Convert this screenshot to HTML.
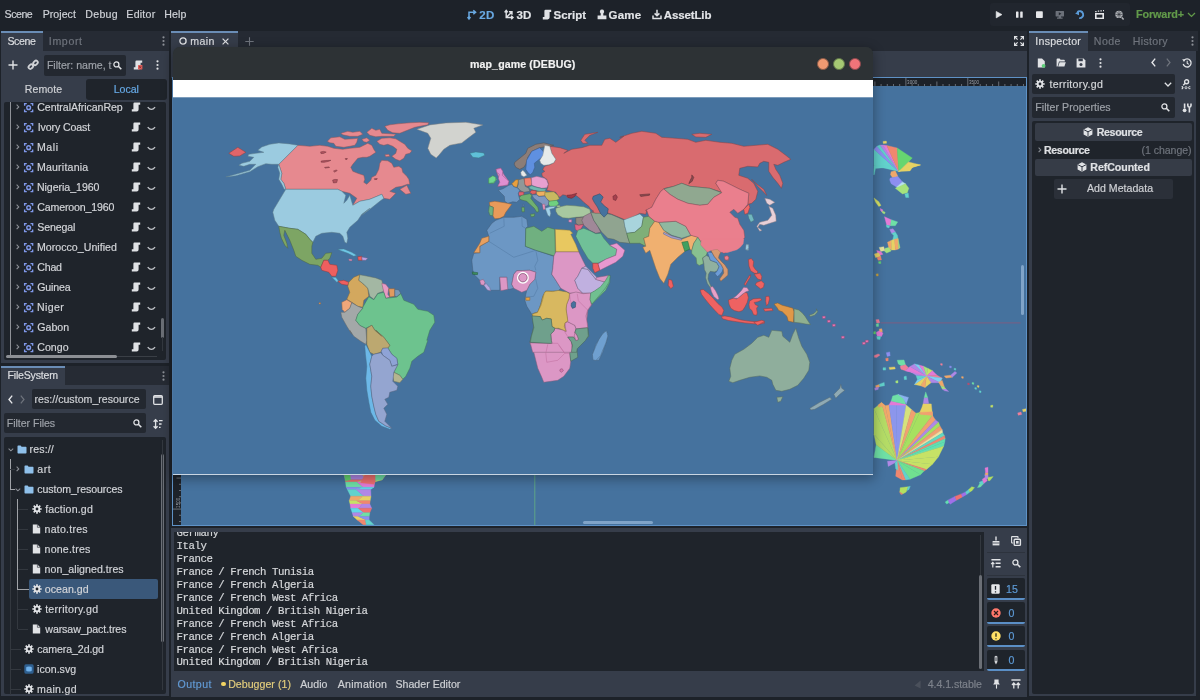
<!DOCTYPE html>
<html lang="en">
<head>
<meta charset="utf-8">
<title>map_game - Godot Engine</title>
<style>
*{box-sizing:border-box;margin:0;padding:0}
html,body{width:1200px;height:700px;overflow:hidden;background:#1d2229}
body{position:relative;font-family:"Liberation Sans",sans-serif;font-size:10.5px;color:#d3d5d9;line-height:1}
.a{position:absolute}
.t{position:absolute;white-space:pre;line-height:14px;height:14px;-webkit-text-stroke:.18px}
.b{font-weight:700}
.dim{color:#7d828b}
.acc{color:#70bafa}
.panel{position:absolute;background:#363d4a}
.dark{position:absolute;background:#1f242b}
.tabbar{position:absolute;background:#262b34}
.tab{position:absolute;background:#363d4a;border-top:2px solid #6a8db6}
.field{position:absolute;background:#232830;border-radius:2px}
svg{position:absolute;overflow:visible}
.mono{font-family:"Liberation Mono",monospace;font-size:10px;color:#d6d8db}
</style>
</head>
<body>
<div id="root" style="position:absolute;left:0;top:0;width:1200px;height:700px;will-change:transform;overflow:hidden">
<!-- ===== top menu bar ===== -->
<div class="a" style="left:0;top:0;width:1200px;height:30px;background:#1d2229"></div>
<div class="t" style="left:4.62px;top:7.23px;font-size:10.6px;letter-spacing:-0.476px;color:#d0d3d8">Scene</div>
<div class="t" style="left:42.63px;top:7.23px;font-size:10.6px;letter-spacing:0.043px;color:#d0d3d8">Project</div>
<div class="t" style="left:85.33px;top:7.23px;font-size:10.6px;letter-spacing:0.279px;color:#d0d3d8">Debug</div>
<div class="t" style="left:126.33px;top:7.23px;font-size:10.6px;letter-spacing:0.231px;color:#d0d3d8">Editor</div>
<div class="t" style="left:164.33px;top:7.23px;font-size:10.6px;letter-spacing:0.105px;color:#d0d3d8">Help</div>

<!-- workspace switcher -->
<svg style="left:467px;top:9px" width="10" height="11" viewBox="0 0 10 11"><path d="M2 10V3.2H8M6.3 1.2 8.6 3.2 6.3 5.2M.6 8 2 10 3.4 8" fill="none" stroke="#69a9e2" stroke-width="1.5"/></svg>
<div class="t b" style="left:479.20px;top:7.95px;font-size:11.5px;letter-spacing:0.381px;color:#69a9e2">2D</div>
<svg style="left:504px;top:9px" width="10" height="11" viewBox="0 0 10 11"><path d="M2.2 1.5V8.5H9M.6 3.4 2.2 1.4 3.8 3.4M7.2 6.8 9 8.5 7.2 10.2M2.4 8.3 7.6 3.2M5 2.8H8V5.8" fill="none" stroke="#e0e2e5" stroke-width="1.4"/></svg>
<div class="t b" style="left:516.54px;top:7.95px;font-size:11.5px;letter-spacing:0.046px;color:#e3e5e8">3D</div>
<svg style="left:541.5px;top:9px" width="10" height="11" viewBox="0 0 10 11"><path d="M3 .8H9.2V3H7.6V8.6Q7.6 10.4 5.6 10.4H.8V8H2.4V2Q2.4 .8 3.6 .8Z" fill="#e0e2e5"/></svg>
<div class="t b" style="left:553.57px;top:7.95px;font-size:11.5px;letter-spacing:-0.004px;color:#e3e5e8">Script</div>
<svg style="left:596.5px;top:9px" width="10" height="11" viewBox="0 0 10 11"><path d="M5 .6A2.1 2.1 0 0 1 6.3 4.4V6.4H9.4V10.2H.6V6.4H3.7V4.4A2.1 2.1 0 0 1 5 .6Z" fill="#e0e2e5"/></svg>
<div class="t b" style="left:608.53px;top:7.95px;font-size:11.5px;letter-spacing:0.201px;color:#e3e5e8">Game</div>
<svg style="left:651.5px;top:9px" width="10" height="11" viewBox="0 0 10 11"><path d="M5 .8V6.6M2.6 4.4 5 6.8 7.4 4.4M1 6.6V9.6H9V6.6" fill="none" stroke="#e0e2e5" stroke-width="1.5"/></svg>
<div class="t b" style="left:663.71px;top:7.95px;font-size:11.5px;letter-spacing:-0.115px;color:#e3e5e8">AssetLib</div>

<!-- run bar -->
<div class="a" style="left:990px;top:3.2px;width:140px;height:22.4px;background:#21262e;border-radius:3px"></div>
<svg style="left:994px;top:9px" width="10" height="11" viewBox="0 0 10 11"><path d="M2.2 2.4 8 5.6 2.2 8.9Z" fill="#e6e7ea" stroke="#e6e7ea" stroke-width=".6" stroke-linejoin="round"/></svg>
<svg style="left:1014px;top:9px" width="10" height="11" viewBox="0 0 10 11"><rect x="2" y="2.5" width="2.5" height="6.3" rx=".6" fill="#e6e7ea"/><rect x="6.2" y="2.5" width="2.5" height="6.3" rx=".6" fill="#e6e7ea"/></svg>
<svg style="left:1034px;top:9px" width="10" height="11" viewBox="0 0 10 11"><rect x="2" y="2.3" width="6.8" height="6.8" rx=".8" fill="#e6e7ea"/></svg>
<svg style="left:1054px;top:9px" width="10" height="11" viewBox="0 0 10 11"><path d="M1.6 2.4Q1.6 2 2 2H9.6Q10 2 10 2.4V7Q10 7.4 9.6 7.4H7V8.6H8.6V9.8H3V8.6H4.6V7.4H2Q1.6 7.4 1.6 7Z" fill="#6c717a"/><path d="M4.8 3.2 7.4 4.7 4.8 6.2Z" fill="#21262e"/></svg>
<svg style="left:1074px;top:9px" width="11" height="11" viewBox="0 0 11 11"><path d="M3.4 3A3.5 3.5 0 1 1 5.2 9.1" fill="none" stroke="#5b9bd8" stroke-width="1.9"/><path d="M1.2 4.6 5 1.6 5 6.2Z" fill="#5b9bd8"/></svg>
<svg style="left:1094px;top:9px" width="11" height="11" viewBox="0 0 11 11"><path d="M1 4H10V10H1Z" fill="#e6e7ea"/><path d="M1.2 2.6H2.6M3.8 2.2H5.2M6.4 1.8H7.8M9 1.6H10" stroke="#e6e7ea" stroke-width="1.3"/><rect x="2.6" y="5.6" width="5.8" height="3" fill="#21262e"/></svg>
<svg style="left:1114px;top:9px" width="11" height="11" viewBox="0 0 11 11"><circle cx="5" cy="5.4" r="3.7" fill="#b4b7bc"/><path d="M7.8 8.4 9.6 10.4" stroke="#b4b7bc" stroke-width="1.5"/><path d="M5 1.8V9M1.4 5.4H8.6M2.6 3 7.4 7.8M7.4 3 2.6 7.8" stroke="#21262e" stroke-width=".6"/></svg>
<div class="t b" style="left:1135.98px;top:7.31px;font-size:10.8px;letter-spacing:-0.122px;color:#629a4a">Forward+</div>
<svg style="left:1187px;top:12px" width="9" height="6" viewBox="0 0 9 6"><path d="M1 1 4.5 4.4 8 1" fill="none" stroke="#629a4a" stroke-width="1.3"/></svg>
<!-- ===== scene dock ===== -->
<div class="panel" style="left:1.2px;top:31px;width:167.8px;height:332px"></div>
<div class="tabbar" style="left:43px;top:31px;width:126px;height:19.8px"></div>
<div class="tab" style="left:1.2px;top:31px;width:41.8px;height:19.8px"></div>
<div class="t" style="left:7.42px;top:34.43px;font-size:10.6px;letter-spacing:-0.401px;color:#dcdee1">Scene</div>
<div class="t" style="left:48.82px;top:34.43px;font-size:10.6px;letter-spacing:0.643px;color:#6f747d">Import</div>
<svg style="left:162.2px;top:36px" width="3" height="10" viewBox="0 0 3 10"><circle cx="1.5" cy="1.3" r="1.1" fill="#8b8f96"/><circle cx="1.5" cy="5" r="1.1" fill="#8b8f96"/><circle cx="1.5" cy="8.7" r="1.1" fill="#8b8f96"/></svg>
<svg style="left:8px;top:60px" width="10" height="10" viewBox="0 0 10 10"><path d="M5 .5V9.5M.5 5H9.5" stroke="#e0e2e5" stroke-width="1.4"/></svg>
<svg style="left:27.5px;top:60px" width="10" height="10" viewBox="0 0 10 10"><g fill="none" stroke="#d0d2d6" stroke-width="1.8"><rect x="4.3" y=".4" width="5" height="3.6" rx="1.8" transform="rotate(-45 6.8 2.2) translate(0 1)"/><rect x=".6" y="5.2" width="5" height="3.6" rx="1.8" transform="rotate(-45 3.1 7) translate(0 -.4)"/></g></svg>
<div class="field" style="left:44px;top:55px;width:82px;height:20.5px"></div>
<div class="t" style="left:46.93px;top:58.03px;font-size:10.6px;letter-spacing:-0.018px;color:#9da1a8">Filter: name, t</div>
<svg style="left:113px;top:60.5px" width="9" height="9" viewBox="0 0 9 9"><circle cx="3.4" cy="3.4" r="2.5" fill="none" stroke="#e0e2e5" stroke-width="1.3"/><path d="M5.3 5.3 8.3 8.3" stroke="#e0e2e5" stroke-width="1.6"/></svg>
<svg style="left:133px;top:60px" width="10" height="10" viewBox="0 0 10 10"><path d="M3 .5H9.2V2.8H7.6V7.6Q7.6 9.5 5.6 9.5H.8V7.2H2.4V1.8Q2.4 .5 3.6 .5Z" fill="#e0e2e5"/></svg>
<svg style="left:138.3px;top:65.2px" width="4.4" height="4.4" viewBox="0 0 4.4 4.4"><rect width="4.4" height="4.4" rx=".6" fill="#e0605c"/><path d="M1.1 1.1 3.3 3.3M3.3 1.1 1.1 3.3" stroke="#7a2a2a" stroke-width=".7"/></svg>
<svg style="left:156px;top:60px" width="3" height="10" viewBox="0 0 3 10"><circle cx="1.5" cy="1.3" r="1.1" fill="#e0e2e5"/><circle cx="1.5" cy="5" r="1.1" fill="#e0e2e5"/><circle cx="1.5" cy="8.7" r="1.1" fill="#e0e2e5"/></svg>
<div class="t" style="left:24.83px;top:81.93px;font-size:10.6px;letter-spacing:0.045px;color:#cfd1d5">Remote</div>
<div class="a" style="left:86px;top:79px;width:80.5px;height:20.5px;background:#1f242b;border-radius:3px"></div>
<div class="t" style="left:113.73px;top:81.93px;font-size:10.6px;letter-spacing:-0.041px;color:#66a9e6">Local</div>
<div class="dark" style="left:3.7px;top:101.5px;width:162.8px;height:258px;border-radius:2px"></div>
<div class="a" style="left:9.6px;top:101.5px;width:1.5px;height:253px;background:#8f9298"></div>
<svg style="left:16.1px;top:104.3px" width="3.4" height="5.8" viewBox="0 0 4 7"><path d="M.7 .7 3.3 3.5 .7 6.3" fill="none" stroke="#8b8f96" stroke-width="1.3"/></svg>
<svg style="left:23.900000000000002px;top:102.60000000000001px" width="9.3" height="9.3" viewBox="0 0 10 10"><path d="M.7 3V.7H3M7 .7H9.3V3M9.3 7V9.3H7M3 9.3H.7V7" fill="none" stroke="#8099ea" stroke-width="1.5"/><circle cx="5" cy="5" r="2" fill="none" stroke="#8099ea" stroke-width="1.5"/></svg>
<div class="t" style="left:37.26px;top:99.53px;font-size:10.6px;letter-spacing:-0.070px;color:#d3d5d9">CentralAfricanRep</div>
<svg style="left:131.3px;top:102.2px" width="10" height="10" viewBox="0 0 10 10"><path d="M3 .5H9.2V2.8H7.6V7.6Q7.6 9.5 5.6 9.5H.8V7.2H2.4V1.8Q2.4 .5 3.6 .5Z" fill="#e0e2e5"/></svg>
<svg style="left:146.9px;top:105.9px" width="8.8" height="5.3" viewBox="0 0 10 6"><path d="M.8 1.2Q5 6.4 9.2 1.2" fill="none" stroke="#c4c7cc" stroke-width="1.4"/></svg>
<svg style="left:16.1px;top:124.3px" width="3.4" height="5.8" viewBox="0 0 4 7"><path d="M.7 .7 3.3 3.5 .7 6.3" fill="none" stroke="#8b8f96" stroke-width="1.3"/></svg>
<svg style="left:23.900000000000002px;top:122.60000000000001px" width="9.3" height="9.3" viewBox="0 0 10 10"><path d="M.7 3V.7H3M7 .7H9.3V3M9.3 7V9.3H7M3 9.3H.7V7" fill="none" stroke="#8099ea" stroke-width="1.5"/><circle cx="5" cy="5" r="2" fill="none" stroke="#8099ea" stroke-width="1.5"/></svg>
<div class="t" style="left:37.72px;top:119.53px;font-size:10.6px;letter-spacing:-0.105px;color:#d3d5d9">Ivory Coast</div>
<svg style="left:131.3px;top:122.2px" width="10" height="10" viewBox="0 0 10 10"><path d="M3 .5H9.2V2.8H7.6V7.6Q7.6 9.5 5.6 9.5H.8V7.2H2.4V1.8Q2.4 .5 3.6 .5Z" fill="#e0e2e5"/></svg>
<svg style="left:146.9px;top:125.9px" width="8.8" height="5.3" viewBox="0 0 10 6"><path d="M.8 1.2Q5 6.4 9.2 1.2" fill="none" stroke="#c4c7cc" stroke-width="1.4"/></svg>
<svg style="left:16.1px;top:144.29999999999998px" width="3.4" height="5.8" viewBox="0 0 4 7"><path d="M.7 .7 3.3 3.5 .7 6.3" fill="none" stroke="#8b8f96" stroke-width="1.3"/></svg>
<svg style="left:23.900000000000002px;top:142.6px" width="9.3" height="9.3" viewBox="0 0 10 10"><path d="M.7 3V.7H3M7 .7H9.3V3M9.3 7V9.3H7M3 9.3H.7V7" fill="none" stroke="#8099ea" stroke-width="1.5"/><circle cx="5" cy="5" r="2" fill="none" stroke="#8099ea" stroke-width="1.5"/></svg>
<div class="t" style="left:36.93px;top:139.53px;font-size:10.6px;letter-spacing:0.550px;color:#d3d5d9">Mali</div>
<svg style="left:131.3px;top:142.2px" width="10" height="10" viewBox="0 0 10 10"><path d="M3 .5H9.2V2.8H7.6V7.6Q7.6 9.5 5.6 9.5H.8V7.2H2.4V1.8Q2.4 .5 3.6 .5Z" fill="#e0e2e5"/></svg>
<svg style="left:146.9px;top:145.89999999999998px" width="8.8" height="5.3" viewBox="0 0 10 6"><path d="M.8 1.2Q5 6.4 9.2 1.2" fill="none" stroke="#c4c7cc" stroke-width="1.4"/></svg>
<svg style="left:16.1px;top:164.29999999999998px" width="3.4" height="5.8" viewBox="0 0 4 7"><path d="M.7 .7 3.3 3.5 .7 6.3" fill="none" stroke="#8b8f96" stroke-width="1.3"/></svg>
<svg style="left:23.900000000000002px;top:162.6px" width="9.3" height="9.3" viewBox="0 0 10 10"><path d="M.7 3V.7H3M7 .7H9.3V3M9.3 7V9.3H7M3 9.3H.7V7" fill="none" stroke="#8099ea" stroke-width="1.5"/><circle cx="5" cy="5" r="2" fill="none" stroke="#8099ea" stroke-width="1.5"/></svg>
<div class="t" style="left:36.93px;top:159.53px;font-size:10.6px;letter-spacing:0.198px;color:#d3d5d9">Mauritania</div>
<svg style="left:131.3px;top:162.2px" width="10" height="10" viewBox="0 0 10 10"><path d="M3 .5H9.2V2.8H7.6V7.6Q7.6 9.5 5.6 9.5H.8V7.2H2.4V1.8Q2.4 .5 3.6 .5Z" fill="#e0e2e5"/></svg>
<svg style="left:146.9px;top:165.89999999999998px" width="8.8" height="5.3" viewBox="0 0 10 6"><path d="M.8 1.2Q5 6.4 9.2 1.2" fill="none" stroke="#c4c7cc" stroke-width="1.4"/></svg>
<svg style="left:16.1px;top:184.29999999999998px" width="3.4" height="5.8" viewBox="0 0 4 7"><path d="M.7 .7 3.3 3.5 .7 6.3" fill="none" stroke="#8b8f96" stroke-width="1.3"/></svg>
<svg style="left:23.900000000000002px;top:182.6px" width="9.3" height="9.3" viewBox="0 0 10 10"><path d="M.7 3V.7H3M7 .7H9.3V3M9.3 7V9.3H7M3 9.3H.7V7" fill="none" stroke="#8099ea" stroke-width="1.5"/><circle cx="5" cy="5" r="2" fill="none" stroke="#8099ea" stroke-width="1.5"/></svg>
<div class="t" style="left:36.93px;top:179.53px;font-size:10.6px;letter-spacing:-0.043px;color:#d3d5d9">Nigeria_1960</div>
<svg style="left:131.3px;top:182.2px" width="10" height="10" viewBox="0 0 10 10"><path d="M3 .5H9.2V2.8H7.6V7.6Q7.6 9.5 5.6 9.5H.8V7.2H2.4V1.8Q2.4 .5 3.6 .5Z" fill="#e0e2e5"/></svg>
<svg style="left:146.9px;top:185.89999999999998px" width="8.8" height="5.3" viewBox="0 0 10 6"><path d="M.8 1.2Q5 6.4 9.2 1.2" fill="none" stroke="#c4c7cc" stroke-width="1.4"/></svg>
<svg style="left:16.1px;top:204.29999999999998px" width="3.4" height="5.8" viewBox="0 0 4 7"><path d="M.7 .7 3.3 3.5 .7 6.3" fill="none" stroke="#8b8f96" stroke-width="1.3"/></svg>
<svg style="left:23.900000000000002px;top:202.6px" width="9.3" height="9.3" viewBox="0 0 10 10"><path d="M.7 3V.7H3M7 .7H9.3V3M9.3 7V9.3H7M3 9.3H.7V7" fill="none" stroke="#8099ea" stroke-width="1.5"/><circle cx="5" cy="5" r="2" fill="none" stroke="#8099ea" stroke-width="1.5"/></svg>
<div class="t" style="left:37.26px;top:199.53px;font-size:10.6px;letter-spacing:-0.151px;color:#d3d5d9">Cameroon_1960</div>
<svg style="left:131.3px;top:202.2px" width="10" height="10" viewBox="0 0 10 10"><path d="M3 .5H9.2V2.8H7.6V7.6Q7.6 9.5 5.6 9.5H.8V7.2H2.4V1.8Q2.4 .5 3.6 .5Z" fill="#e0e2e5"/></svg>
<svg style="left:146.9px;top:205.89999999999998px" width="8.8" height="5.3" viewBox="0 0 10 6"><path d="M.8 1.2Q5 6.4 9.2 1.2" fill="none" stroke="#c4c7cc" stroke-width="1.4"/></svg>
<svg style="left:16.1px;top:224.29999999999998px" width="3.4" height="5.8" viewBox="0 0 4 7"><path d="M.7 .7 3.3 3.5 .7 6.3" fill="none" stroke="#8b8f96" stroke-width="1.3"/></svg>
<svg style="left:23.900000000000002px;top:222.6px" width="9.3" height="9.3" viewBox="0 0 10 10"><path d="M.7 3V.7H3M7 .7H9.3V3M9.3 7V9.3H7M3 9.3H.7V7" fill="none" stroke="#8099ea" stroke-width="1.5"/><circle cx="5" cy="5" r="2" fill="none" stroke="#8099ea" stroke-width="1.5"/></svg>
<div class="t" style="left:37.32px;top:219.53px;font-size:10.6px;letter-spacing:-0.135px;color:#d3d5d9">Senegal</div>
<svg style="left:131.3px;top:222.2px" width="10" height="10" viewBox="0 0 10 10"><path d="M3 .5H9.2V2.8H7.6V7.6Q7.6 9.5 5.6 9.5H.8V7.2H2.4V1.8Q2.4 .5 3.6 .5Z" fill="#e0e2e5"/></svg>
<svg style="left:146.9px;top:225.89999999999998px" width="8.8" height="5.3" viewBox="0 0 10 6"><path d="M.8 1.2Q5 6.4 9.2 1.2" fill="none" stroke="#c4c7cc" stroke-width="1.4"/></svg>
<svg style="left:16.1px;top:244.29999999999998px" width="3.4" height="5.8" viewBox="0 0 4 7"><path d="M.7 .7 3.3 3.5 .7 6.3" fill="none" stroke="#8b8f96" stroke-width="1.3"/></svg>
<svg style="left:23.900000000000002px;top:242.6px" width="9.3" height="9.3" viewBox="0 0 10 10"><path d="M.7 3V.7H3M7 .7H9.3V3M9.3 7V9.3H7M3 9.3H.7V7" fill="none" stroke="#8099ea" stroke-width="1.5"/><circle cx="5" cy="5" r="2" fill="none" stroke="#8099ea" stroke-width="1.5"/></svg>
<div class="t" style="left:36.93px;top:239.53px;font-size:10.6px;letter-spacing:0.037px;color:#d3d5d9">Morocco_Unified</div>
<svg style="left:131.3px;top:242.2px" width="10" height="10" viewBox="0 0 10 10"><path d="M3 .5H9.2V2.8H7.6V7.6Q7.6 9.5 5.6 9.5H.8V7.2H2.4V1.8Q2.4 .5 3.6 .5Z" fill="#e0e2e5"/></svg>
<svg style="left:146.9px;top:245.89999999999998px" width="8.8" height="5.3" viewBox="0 0 10 6"><path d="M.8 1.2Q5 6.4 9.2 1.2" fill="none" stroke="#c4c7cc" stroke-width="1.4"/></svg>
<svg style="left:16.1px;top:264.3px" width="3.4" height="5.8" viewBox="0 0 4 7"><path d="M.7 .7 3.3 3.5 .7 6.3" fill="none" stroke="#8b8f96" stroke-width="1.3"/></svg>
<svg style="left:23.900000000000002px;top:262.59999999999997px" width="9.3" height="9.3" viewBox="0 0 10 10"><path d="M.7 3V.7H3M7 .7H9.3V3M9.3 7V9.3H7M3 9.3H.7V7" fill="none" stroke="#8099ea" stroke-width="1.5"/><circle cx="5" cy="5" r="2" fill="none" stroke="#8099ea" stroke-width="1.5"/></svg>
<div class="t" style="left:37.26px;top:259.53px;font-size:10.6px;letter-spacing:-0.206px;color:#d3d5d9">Chad</div>
<svg style="left:131.3px;top:262.2px" width="10" height="10" viewBox="0 0 10 10"><path d="M3 .5H9.2V2.8H7.6V7.6Q7.6 9.5 5.6 9.5H.8V7.2H2.4V1.8Q2.4 .5 3.6 .5Z" fill="#e0e2e5"/></svg>
<svg style="left:146.9px;top:265.9px" width="8.8" height="5.3" viewBox="0 0 10 6"><path d="M.8 1.2Q5 6.4 9.2 1.2" fill="none" stroke="#c4c7cc" stroke-width="1.4"/></svg>
<svg style="left:16.1px;top:284.3px" width="3.4" height="5.8" viewBox="0 0 4 7"><path d="M.7 .7 3.3 3.5 .7 6.3" fill="none" stroke="#8b8f96" stroke-width="1.3"/></svg>
<svg style="left:23.900000000000002px;top:282.59999999999997px" width="9.3" height="9.3" viewBox="0 0 10 10"><path d="M.7 3V.7H3M7 .7H9.3V3M9.3 7V9.3H7M3 9.3H.7V7" fill="none" stroke="#8099ea" stroke-width="1.5"/><circle cx="5" cy="5" r="2" fill="none" stroke="#8099ea" stroke-width="1.5"/></svg>
<div class="t" style="left:37.27px;top:279.53px;font-size:10.6px;letter-spacing:-0.150px;color:#d3d5d9">Guinea</div>
<svg style="left:131.3px;top:282.2px" width="10" height="10" viewBox="0 0 10 10"><path d="M3 .5H9.2V2.8H7.6V7.6Q7.6 9.5 5.6 9.5H.8V7.2H2.4V1.8Q2.4 .5 3.6 .5Z" fill="#e0e2e5"/></svg>
<svg style="left:146.9px;top:285.9px" width="8.8" height="5.3" viewBox="0 0 10 6"><path d="M.8 1.2Q5 6.4 9.2 1.2" fill="none" stroke="#c4c7cc" stroke-width="1.4"/></svg>
<svg style="left:16.1px;top:304.3px" width="3.4" height="5.8" viewBox="0 0 4 7"><path d="M.7 .7 3.3 3.5 .7 6.3" fill="none" stroke="#8b8f96" stroke-width="1.3"/></svg>
<svg style="left:23.900000000000002px;top:302.59999999999997px" width="9.3" height="9.3" viewBox="0 0 10 10"><path d="M.7 3V.7H3M7 .7H9.3V3M9.3 7V9.3H7M3 9.3H.7V7" fill="none" stroke="#8099ea" stroke-width="1.5"/><circle cx="5" cy="5" r="2" fill="none" stroke="#8099ea" stroke-width="1.5"/></svg>
<div class="t" style="left:36.93px;top:299.53px;font-size:10.6px;letter-spacing:0.354px;color:#d3d5d9">Niger</div>
<svg style="left:131.3px;top:302.2px" width="10" height="10" viewBox="0 0 10 10"><path d="M3 .5H9.2V2.8H7.6V7.6Q7.6 9.5 5.6 9.5H.8V7.2H2.4V1.8Q2.4 .5 3.6 .5Z" fill="#e0e2e5"/></svg>
<svg style="left:146.9px;top:305.9px" width="8.8" height="5.3" viewBox="0 0 10 6"><path d="M.8 1.2Q5 6.4 9.2 1.2" fill="none" stroke="#c4c7cc" stroke-width="1.4"/></svg>
<svg style="left:16.1px;top:324.3px" width="3.4" height="5.8" viewBox="0 0 4 7"><path d="M.7 .7 3.3 3.5 .7 6.3" fill="none" stroke="#8b8f96" stroke-width="1.3"/></svg>
<svg style="left:23.900000000000002px;top:322.59999999999997px" width="9.3" height="9.3" viewBox="0 0 10 10"><path d="M.7 3V.7H3M7 .7H9.3V3M9.3 7V9.3H7M3 9.3H.7V7" fill="none" stroke="#8099ea" stroke-width="1.5"/><circle cx="5" cy="5" r="2" fill="none" stroke="#8099ea" stroke-width="1.5"/></svg>
<div class="t" style="left:37.27px;top:319.53px;font-size:10.6px;letter-spacing:0.024px;color:#d3d5d9">Gabon</div>
<svg style="left:131.3px;top:322.2px" width="10" height="10" viewBox="0 0 10 10"><path d="M3 .5H9.2V2.8H7.6V7.6Q7.6 9.5 5.6 9.5H.8V7.2H2.4V1.8Q2.4 .5 3.6 .5Z" fill="#e0e2e5"/></svg>
<svg style="left:146.9px;top:325.9px" width="8.8" height="5.3" viewBox="0 0 10 6"><path d="M.8 1.2Q5 6.4 9.2 1.2" fill="none" stroke="#c4c7cc" stroke-width="1.4"/></svg>
<svg style="left:16.1px;top:344.3px" width="3.4" height="5.8" viewBox="0 0 4 7"><path d="M.7 .7 3.3 3.5 .7 6.3" fill="none" stroke="#8b8f96" stroke-width="1.3"/></svg>
<svg style="left:23.900000000000002px;top:342.59999999999997px" width="9.3" height="9.3" viewBox="0 0 10 10"><path d="M.7 3V.7H3M7 .7H9.3V3M9.3 7V9.3H7M3 9.3H.7V7" fill="none" stroke="#8099ea" stroke-width="1.5"/><circle cx="5" cy="5" r="2" fill="none" stroke="#8099ea" stroke-width="1.5"/></svg>
<div class="t" style="left:37.26px;top:339.53px;font-size:10.6px;letter-spacing:0.037px;color:#d3d5d9">Congo</div>
<svg style="left:131.3px;top:342.2px" width="10" height="10" viewBox="0 0 10 10"><path d="M3 .5H9.2V2.8H7.6V7.6Q7.6 9.5 5.6 9.5H.8V7.2H2.4V1.8Q2.4 .5 3.6 .5Z" fill="#e0e2e5"/></svg>
<svg style="left:146.9px;top:345.9px" width="8.8" height="5.3" viewBox="0 0 10 6"><path d="M.8 1.2Q5 6.4 9.2 1.2" fill="none" stroke="#c4c7cc" stroke-width="1.4"/></svg>
<div class="a" style="left:161.2px;top:317.5px;width:3px;height:20px;background:#6b6f76;border-radius:1.5px"></div>
<div class="a" style="left:162.3px;top:337px;width:1px;height:13.5px;background:#33383f"></div>
<div class="a" style="left:6px;top:354.8px;width:111px;height:3px;background:#8c8f94;border-radius:1.5px"></div>
<div class="a" style="left:117px;top:355.8px;width:40px;height:1px;background:#3a3f46"></div>
<!-- ===== filesystem dock ===== -->
<div class="panel" style="left:1.2px;top:365.5px;width:167.8px;height:330.5px"></div>
<div class="tabbar" style="left:65px;top:365.5px;width:104px;height:19.8px"></div>
<div class="tab" style="left:1.2px;top:365.5px;width:63.8px;height:19.8px"></div>
<div class="t" style="left:7.53px;top:368.13px;font-size:10.6px;letter-spacing:-0.217px;color:#dcdee1">FileSystem</div>
<svg style="left:162.2px;top:370.5px" width="3" height="10" viewBox="0 0 3 10"><circle cx="1.5" cy="1.3" r="1.1" fill="#8b8f96"/><circle cx="1.5" cy="5" r="1.1" fill="#8b8f96"/><circle cx="1.5" cy="8.7" r="1.1" fill="#8b8f96"/></svg>
<svg style="left:8px;top:395px" width="5" height="9" viewBox="0 0 5 9"><path d="M4.2 .6 1 4.5 4.2 8.4" fill="none" stroke="#e6e7ea" stroke-width="1.4"/></svg>
<svg style="left:20px;top:395px" width="5" height="9" viewBox="0 0 5 9"><path d="M.8 .6 4 4.5 .8 8.4" fill="none" stroke="#6f747d" stroke-width="1.2"/></svg>
<div class="field" style="left:31.7px;top:389.3px;width:114.3px;height:20.2px"></div>
<div class="t" style="left:34.50px;top:392.13px;font-size:10.6px;letter-spacing:0.016px;color:#cfd1d5">res://custom_resource</div>
<svg style="left:152.5px;top:394.5px" width="10" height="10" viewBox="0 0 10 10"><rect x=".7" y=".7" width="8.6" height="8.6" rx="1" fill="none" stroke="#e0e2e5" stroke-width="1.3"/><path d="M.7 2H9.3" stroke="#e0e2e5" stroke-width="1.6"/></svg>
<div class="field" style="left:4.2px;top:413.3px;width:141.8px;height:20.2px"></div>
<div class="t" style="left:6.83px;top:416.13px;font-size:10.6px;letter-spacing:-0.048px;color:#9da1a8">Filter Files</div>
<svg style="left:133px;top:419px" width="9" height="9" viewBox="0 0 9 9"><circle cx="3.4" cy="3.4" r="2.5" fill="none" stroke="#e0e2e5" stroke-width="1.3"/><path d="M5.3 5.3 8.3 8.3" stroke="#e0e2e5" stroke-width="1.6"/></svg>
<svg style="left:152.5px;top:418.5px" width="10" height="10" viewBox="0 0 10 10"><path d="M2.6 .8V9.2M.6 2.8 2.6 .7 4.6 2.8M.6 7.2 2.6 9.3 4.6 7.2M6 1.6H9.6M6 5H8.6M6 8.4H7.6" fill="none" stroke="#e0e2e5" stroke-width="1.3"/></svg>
<div class="dark" style="left:4.2px;top:436.7px;width:162.3px;height:257px;border-radius:2px"></div>
<div class="a" style="left:10px;top:459px;width:1px;height:236px;background:#33383f"></div>
<div class="a" style="left:9.6px;top:459px;width:1.6px;height:30px;background:#a0a3a8"></div>
<div class="a" style="left:10px;top:488.5px;width:4.5px;height:1px;background:#a0a3a8"></div>
<div class="a" style="left:10px;top:469px;width:4.5px;height:1px;background:#33383f"></div>
<div class="a" style="left:17.2px;top:499px;width:1px;height:130px;background:#33383f"></div>
<div class="a" style="left:16.9px;top:499px;width:1.6px;height:90px;background:#a0a3a8"></div>
<div class="a" style="left:17.2px;top:588.5px;width:12px;height:1px;background:#a0a3a8"></div>
<div class="a" style="left:18px;top:509px;width:10px;height:1px;background:#33383f"></div>
<div class="a" style="left:18px;top:529px;width:10px;height:1px;background:#33383f"></div>
<div class="a" style="left:18px;top:549px;width:10px;height:1px;background:#33383f"></div>
<div class="a" style="left:18px;top:569px;width:10px;height:1px;background:#33383f"></div>
<div class="a" style="left:18px;top:609px;width:10px;height:1px;background:#33383f"></div>
<div class="a" style="left:18px;top:629px;width:10px;height:1px;background:#33383f"></div>
<div class="a" style="left:11px;top:649px;width:10px;height:1px;background:#33383f"></div>
<div class="a" style="left:11px;top:669px;width:10px;height:1px;background:#33383f"></div>
<div class="a" style="left:11px;top:689px;width:10px;height:1px;background:#33383f"></div>
<div class="a" style="left:28.7px;top:578.5px;width:129.8px;height:20px;background:#3a587a;border-radius:2px"></div>
<svg style="left:8.4px;top:448.0px" width="5.8" height="3.4" viewBox="0 0 7 4"><path d="M.7 .7 3.5 3.3 6.3 .7" fill="none" stroke="#8b8f96" stroke-width="1.3"/></svg>
<svg style="left:16.5px;top:444.5px" width="10" height="9" viewBox="0 0 10 9"><path d="M.5 1.2Q.5 .5 1.2 .5H3.6L4.6 1.8H8.8Q9.5 1.8 9.5 2.5V7.8Q9.5 8.5 8.8 8.5H1.2Q.5 8.5 .5 7.8Z" fill="#8fc0ea"/></svg>
<div class="t" style="left:29.50px;top:441.53px;font-size:10.6px;letter-spacing:0.149px;color:#d3d5d9">res://</div>
<svg style="left:16.3px;top:466.3px" width="3.4" height="5.8" viewBox="0 0 4 7"><path d="M.7 .7 3.3 3.5 .7 6.3" fill="none" stroke="#8b8f96" stroke-width="1.3"/></svg>
<svg style="left:23.8px;top:464.5px" width="10" height="9" viewBox="0 0 10 9"><path d="M.5 1.2Q.5 .5 1.2 .5H3.6L4.6 1.8H8.8Q9.5 1.8 9.5 2.5V7.8Q9.5 8.5 8.8 8.5H1.2Q.5 8.5 .5 7.8Z" fill="#8fc0ea"/></svg>
<div class="t" style="left:37.35px;top:461.53px;font-size:10.6px;letter-spacing:0.479px;color:#d3d5d9">art</div>
<svg style="left:15.4px;top:488.0px" width="5.8" height="3.4" viewBox="0 0 7 4"><path d="M.7 .7 3.5 3.3 6.3 .7" fill="none" stroke="#8b8f96" stroke-width="1.3"/></svg>
<svg style="left:23.8px;top:484.5px" width="10" height="9" viewBox="0 0 10 9"><path d="M.5 1.2Q.5 .5 1.2 .5H3.6L4.6 1.8H8.8Q9.5 1.8 9.5 2.5V7.8Q9.5 8.5 8.8 8.5H1.2Q.5 8.5 .5 7.8Z" fill="#8fc0ea"/></svg>
<div class="t" style="left:37.35px;top:481.53px;font-size:10.6px;letter-spacing:-0.085px;color:#d3d5d9">custom_resources</div>
<svg style="left:31.5px;top:504.2px" width="10" height="10" viewBox="0 0 10 10"><g stroke="#e0e2e5" stroke-width="1.7"><path d="M5 .3V9.7M.3 5H9.7M1.7 1.7 8.3 8.3M8.3 1.7 1.7 8.3"/></g><circle cx="5" cy="5" r="3.2" fill="#e0e2e5"/><circle cx="5" cy="5" r="1.4" fill="#1f242b"/></svg>
<div class="t" style="left:45.15px;top:501.53px;font-size:10.6px;letter-spacing:0.196px;color:#d3d5d9">faction.gd</div>
<svg style="left:31.8px;top:524.2px" width="9" height="10" viewBox="0 0 9 10"><path d="M.8 .5H5.4L8.2 3.3V9.5H.8Z" fill="#e0e2e5"/><path d="M5.4 .5V3.3H8.2" fill="none" stroke="#1f242b" stroke-width=".6"/></svg>
<div class="t" style="left:44.60px;top:521.53px;font-size:10.6px;letter-spacing:0.218px;color:#d3d5d9">nato.tres</div>
<svg style="left:31.8px;top:544.2px" width="9" height="10" viewBox="0 0 9 10"><path d="M.8 .5H5.4L8.2 3.3V9.5H.8Z" fill="#e0e2e5"/><path d="M5.4 .5V3.3H8.2" fill="none" stroke="#1f242b" stroke-width=".6"/></svg>
<div class="t" style="left:44.60px;top:541.53px;font-size:10.6px;letter-spacing:0.186px;color:#d3d5d9">none.tres</div>
<svg style="left:31.8px;top:564.2px" width="9" height="10" viewBox="0 0 9 10"><path d="M.8 .5H5.4L8.2 3.3V9.5H.8Z" fill="#e0e2e5"/><path d="M5.4 .5V3.3H8.2" fill="none" stroke="#1f242b" stroke-width=".6"/></svg>
<div class="t" style="left:44.60px;top:561.53px;font-size:10.6px;letter-spacing:0.047px;color:#d3d5d9">non_aligned.tres</div>
<svg style="left:31.5px;top:584.2px" width="10" height="10" viewBox="0 0 10 10"><g stroke="#e0e2e5" stroke-width="1.7"><path d="M5 .3V9.7M.3 5H9.7M1.7 1.7 8.3 8.3M8.3 1.7 1.7 8.3"/></g><circle cx="5" cy="5" r="3.2" fill="#e0e2e5"/><circle cx="5" cy="5" r="1.4" fill="#1f242b"/></svg>
<div class="t" style="left:44.85px;top:581.53px;font-size:10.6px;letter-spacing:0.030px;color:#d3d5d9">ocean.gd</div>
<svg style="left:31.5px;top:604.2px" width="10" height="10" viewBox="0 0 10 10"><g stroke="#e0e2e5" stroke-width="1.7"><path d="M5 .3V9.7M.3 5H9.7M1.7 1.7 8.3 8.3M8.3 1.7 1.7 8.3"/></g><circle cx="5" cy="5" r="3.2" fill="#e0e2e5"/><circle cx="5" cy="5" r="1.4" fill="#1f242b"/></svg>
<div class="t" style="left:45.14px;top:601.53px;font-size:10.6px;letter-spacing:0.280px;color:#d3d5d9">territory.gd</div>
<svg style="left:31.8px;top:624.2px" width="9" height="10" viewBox="0 0 9 10"><path d="M.8 .5H5.4L8.2 3.3V9.5H.8Z" fill="#e0e2e5"/><path d="M5.4 .5V3.3H8.2" fill="none" stroke="#1f242b" stroke-width=".6"/></svg>
<div class="t" style="left:45.32px;top:621.53px;font-size:10.6px;letter-spacing:-0.087px;color:#d3d5d9">warsaw_pact.tres</div>
<svg style="left:23.8px;top:644.2px" width="10" height="10" viewBox="0 0 10 10"><g stroke="#e0e2e5" stroke-width="1.7"><path d="M5 .3V9.7M.3 5H9.7M1.7 1.7 8.3 8.3M8.3 1.7 1.7 8.3"/></g><circle cx="5" cy="5" r="3.2" fill="#e0e2e5"/><circle cx="5" cy="5" r="1.4" fill="#1f242b"/></svg>
<div class="t" style="left:37.35px;top:641.53px;font-size:10.6px;letter-spacing:-0.103px;color:#d3d5d9">camera_2d.gd</div>
<svg style="left:23.8px;top:664.2px" width="10" height="10" viewBox="0 0 10 10"><rect x=".3" y=".3" width="9.4" height="9.4" rx="1.6" fill="#2f5f8f"/><path d="M2.2 4Q2.2 2.6 3.4 2.8L5 2.4 6.6 2.8Q7.8 2.6 7.8 4V6.6Q7.8 7.6 5 7.6 2.2 7.6 2.2 6.6Z" fill="#6fb0ea"/></svg>
<div class="t" style="left:37.09px;top:661.53px;font-size:10.6px;letter-spacing:0.030px;color:#d3d5d9">icon.svg</div>
<svg style="left:23.8px;top:684.2px" width="10" height="10" viewBox="0 0 10 10"><g stroke="#e0e2e5" stroke-width="1.7"><path d="M5 .3V9.7M.3 5H9.7M1.7 1.7 8.3 8.3M8.3 1.7 1.7 8.3"/></g><circle cx="5" cy="5" r="3.2" fill="#e0e2e5"/><circle cx="5" cy="5" r="1.4" fill="#1f242b"/></svg>
<div class="t" style="left:37.10px;top:681.53px;font-size:10.6px;letter-spacing:0.313px;color:#d3d5d9">main.gd</div>
<div class="a" style="left:161.2px;top:453.5px;width:3px;height:188px;background:#6b6f76;border-radius:1.5px"></div>
<div class="a" style="left:162.3px;top:440px;width:1px;height:250px;background:#33383f"></div>
<!-- ===== inspector dock ===== -->
<div class="panel" style="left:1029px;top:31px;width:167.4px;height:665px"></div>
<div class="tabbar" style="left:1088px;top:31px;width:109.7px;height:19.8px"></div>
<div class="tab" style="left:1029px;top:31px;width:59px;height:19.8px"></div>
<div class="t" style="left:1035.32px;top:34.43px;font-size:10.6px;letter-spacing:0.244px;color:#dcdee1">Inspector</div>
<div class="t" style="left:1093.83px;top:34.43px;font-size:10.6px;letter-spacing:0.433px;color:#6f747d">Node</div>
<div class="t" style="left:1132.83px;top:34.43px;font-size:10.6px;letter-spacing:0.302px;color:#6f747d">History</div>
<svg style="left:1190.6px;top:36px" width="3" height="10" viewBox="0 0 3 10"><circle cx="1.5" cy="1.3" r="1.1" fill="#8b8f96"/><circle cx="1.5" cy="5" r="1.1" fill="#8b8f96"/><circle cx="1.5" cy="8.7" r="1.1" fill="#8b8f96"/></svg>
<svg style="left:1036.5px;top:57.5px" width="9" height="10" viewBox="0 0 9 10"><path d="M.8 .5H5L7.8 3.3V9.5H.8Z" fill="#e0e2e5"/><circle cx="6.6" cy="7.8" r="1.9" fill="#5fd07a"/></svg>
<svg style="left:1056px;top:58px" width="10" height="9" viewBox="0 0 10 9"><path d="M.6 1.4Q.6 .6 1.4 .6H3.6L4.6 1.8H8Q8.8 1.8 8.8 2.6V3.4H3L1.6 8.4H.6Z" fill="#e0e2e5"/><path d="M3.6 4.2H9.8L8.4 8.4H2.2Z" fill="#e0e2e5"/></svg>
<svg style="left:1076px;top:58px" width="10" height="10" viewBox="0 0 10 10"><path d="M.6 .6H7.6L9.4 2.4V9.4H.6Z" fill="#e0e2e5"/><rect x="2.4" y=".6" width="4.4" height="2.6" fill="#363d4a"/><circle cx="5" cy="6.4" r="1.5" fill="#363d4a"/></svg>
<svg style="left:1099.4px;top:57.5px" width="3" height="10" viewBox="0 0 3 10"><circle cx="1.5" cy="1.3" r="1.1" fill="#e0e2e5"/><circle cx="1.5" cy="5" r="1.1" fill="#e0e2e5"/><circle cx="1.5" cy="8.7" r="1.1" fill="#e0e2e5"/></svg>
<svg style="left:1151px;top:58px" width="5" height="9" viewBox="0 0 5 9"><path d="M4.2 .6 1 4.5 4.2 8.4" fill="none" stroke="#e6e7ea" stroke-width="1.4"/></svg>
<svg style="left:1165.5px;top:58px" width="5" height="9" viewBox="0 0 5 9"><path d="M.8 .6 4 4.5 .8 8.4" fill="none" stroke="#6f747d" stroke-width="1.2"/></svg>
<svg style="left:1181.5px;top:58px" width="10" height="10" viewBox="0 0 10 10"><path d="M2 2.4A4 4 0 1 1 1.2 6" fill="none" stroke="#e0e2e5" stroke-width="1.3"/><path d="M.2 1.2 3.6 1.2 2 4Z" fill="#e0e2e5"/><path d="M5.2 2.8V5.2L6.8 6.4" fill="none" stroke="#e0e2e5" stroke-width="1.1"/></svg>
<div class="field" style="left:1032.2px;top:73.6px;width:142.4px;height:20.4px"></div>
<svg style="left:1034.8px;top:78.8px" width="10" height="10" viewBox="0 0 10 10"><g stroke="#e0e2e5" stroke-width="1.7"><path d="M5 .3V9.7M.3 5H9.7M1.7 1.7 8.3 8.3M8.3 1.7 1.7 8.3"/></g><circle cx="5" cy="5" r="3.2" fill="#e0e2e5"/><circle cx="5" cy="5" r="1.4" fill="#21262e"/></svg>
<div class="t" style="left:1049.44px;top:76.53px;font-size:10.6px;letter-spacing:0.326px;color:#d6d8db">territory.gd</div>
<svg style="left:1163.5px;top:81.5px" width="8" height="5" viewBox="0 0 8 5"><path d="M.8 .8 4 4 7.2 .8" fill="none" stroke="#e0e2e5" stroke-width="1.3"/></svg>
<svg style="left:1181px;top:78.5px" width="10" height="11" viewBox="0 0 10 11"><circle cx="5.6" cy="2.8" r="2" fill="none" stroke="#e0e2e5" stroke-width="1.4"/><path d="M4.2 4.2 2.2 6.2" stroke="#e0e2e5" stroke-width="1.4"/><path d="M1.4 7.4V10M.6 7.6H1.6Q2.6 8.7 1.6 9.8H.6M4 8.7A1 1.1 0 1 0 6 8.7 1 1.1 0 1 0 4 8.7M9.4 7.8Q7.4 7.2 7.4 8.7 7.4 10.2 9.4 9.6" fill="none" stroke="#e0e2e5" stroke-width=".9"/></svg>
<div class="field" style="left:1032.2px;top:97.3px;width:142.4px;height:20.4px"></div>
<div class="t" style="left:1035.33px;top:100.23px;font-size:10.6px;letter-spacing:0.034px;color:#9da1a8">Filter Properties</div>
<svg style="left:1161.3px;top:103px" width="9" height="9" viewBox="0 0 9 9"><circle cx="3.4" cy="3.4" r="2.5" fill="none" stroke="#e0e2e5" stroke-width="1.3"/><path d="M5.3 5.3 8.3 8.3" stroke="#e0e2e5" stroke-width="1.6"/></svg>
<svg style="left:1181.5px;top:102.5px" width="10" height="10" viewBox="0 0 10 10"><path d="M2.6 .6V5.4M7.4 4.4V9.4" stroke="#e0e2e5" stroke-width="1.6"/><circle cx="2.6" cy="7.3" r="1.9" fill="#e0e2e5"/><path d="M5.8 .6V2.6Q5.8 4.2 7.4 4.2 9 4.2 9 2.6V.6" fill="none" stroke="#e0e2e5" stroke-width="1.6"/></svg>
<div class="dark" style="left:1032.2px;top:121px;width:162px;height:572.5px;border-radius:2px"></div>
<div class="a" style="left:1034.6px;top:123.4px;width:157.5px;height:17.3px;background:#363c47;border-radius:2px"></div>
<svg style="left:1083.3px;top:127px" width="10" height="10" viewBox="0 0 10 10"><path d="M5 .3 9.4 2.5V7.5L5 9.7 .6 7.5V2.5Z" fill="#e0e2e5"/><path d="M.9 2.7 5 4.8 9.1 2.7M5 4.8V9.4" fill="none" stroke="#363c47" stroke-width="1"/></svg>
<div class="t b" style="left:1096.69px;top:124.73px;font-size:10.6px;letter-spacing:-0.320px;color:#dfe1e4">Resource</div>
<svg style="left:1038.3px;top:147.1px" width="3.4" height="5.8" viewBox="0 0 4 7"><path d="M.7 .7 3.3 3.5 .7 6.3" fill="none" stroke="#8b8f96" stroke-width="1.3"/></svg>
<div class="t b" style="left:1043.89px;top:142.53px;font-size:10.6px;letter-spacing:-0.306px;color:#dfe1e4">Resource</div>
<div class="t" style="left:1141.54px;top:142.53px;font-size:10.6px;letter-spacing:-0.062px;color:#6f747d">(1 change)</div>
<div class="a" style="left:1034.6px;top:158.8px;width:157.5px;height:17px;background:#363c47;border-radius:2px"></div>
<svg style="left:1077px;top:162.3px" width="10" height="10" viewBox="0 0 10 10"><path d="M5 .3 9.4 2.5V7.5L5 9.7 .6 7.5V2.5Z" fill="#e0e2e5"/><path d="M.9 2.7 5 4.8 9.1 2.7M5 4.8V9.4" fill="none" stroke="#363c47" stroke-width="1"/></svg>
<div class="t b" style="left:1090.29px;top:159.93px;font-size:10.6px;letter-spacing:-0.050px;color:#dfe1e4">RefCounted</div>
<div class="a" style="left:1053.5px;top:179px;width:119.5px;height:20px;background:#2b3039;border-radius:2px"></div>
<svg style="left:1057.2px;top:184px" width="10" height="10" viewBox="0 0 10 10"><path d="M5 .5V9.5M.5 5H9.5" stroke="#e0e2e5" stroke-width="1.4"/></svg>
<div class="t" style="left:1086.88px;top:181.33px;font-size:10.6px;letter-spacing:0.029px;color:#d0d2d6">Add Metadata</div>
<!-- ===== scene tabs ===== -->
<div class="a" style="left:170.7px;top:31px;width:856.8px;height:19.8px;background:#252a33"></div>
<div class="tab" style="left:170.7px;top:31px;width:67.1px;height:19.8px"></div>
<svg style="left:179px;top:37px" width="8" height="8" viewBox="0 0 8 8"><circle cx="4" cy="4" r="3.1" fill="none" stroke="#e0e2e5" stroke-width="1.3"/></svg>
<div class="t" style="left:190.20px;top:34.43px;font-size:10.6px;letter-spacing:0.439px;color:#dcdee1">main</div>
<svg style="left:222px;top:37.8px" width="7" height="7" viewBox="0 0 7 7"><path d="M.6 .6 6.4 6.4M6.4 .6 .6 6.4" stroke="#e0e2e5" stroke-width="1.2"/></svg>
<svg style="left:244.5px;top:36.5px" width="9" height="9" viewBox="0 0 9 9"><path d="M4.5 .3V8.7M.3 4.5H8.7" stroke="#6f747d" stroke-width="1.1"/></svg>
<svg style="left:1013.5px;top:36.2px" width="10" height="10" viewBox="0 0 10 10"><g fill="none" stroke="#e0e2e5" stroke-width="1.2"><path d="M.6 3.4V.6H3.4M6.6 .6H9.4V3.4M9.4 6.6V9.4H6.6M3.4 9.4H.6V6.6"/><path d="M.8 .8 3.6 3.6M9.2 .8 6.4 3.6M9.2 9.2 6.4 6.4M.8 9.2 3.6 6.4"/></g></svg>
<!-- ===== editor 2D viewport ===== -->
<div class="panel" style="left:170.7px;top:50.8px;width:856.8px;height:27.2px"></div>
<div class="a" id="viewport" style="left:171.5px;top:77.3px;width:855.5px;height:448.7px;background:#45729e;overflow:hidden;border:1.3px solid #5f92c6">
<svg style="left:0;top:0" width="853.5" height="446.7" viewBox="172.5 78.3 853.5 446.7">
<polygon fill="#62d2cc" stroke="#62d2cc" stroke-width=".35" points="898.2,171.7 873.5,166 873.5,149.5"/>
<polygon fill="#8c8ef0" stroke="#8c8ef0" stroke-width=".35" points="898.2,171.7 873.5,149.5 876.5,146.5"/>
<polygon fill="#62d2cc" stroke="#62d2cc" stroke-width=".35" points="898.2,171.7 876.5,146.5 879.5,145.3"/>
<polygon fill="#b088e6" stroke="#b088e6" stroke-width=".35" points="898.2,171.7 879.5,145.3 882.5,145.4"/>
<polygon fill="#e47ad6" stroke="#e47ad6" stroke-width=".35" points="898.2,171.7 882.5,145.4 886.2,145.7"/>
<polygon fill="#f0876f" stroke="#f0876f" stroke-width=".35" points="898.2,171.7 886.2,145.7 896.7,148.3"/>
<polygon fill="#66d670" stroke="#66d670" stroke-width=".35" points="898.2,171.7 896.7,148.3 911.7,158.2"/>
<polygon fill="#66d670" stroke="#66d670" stroke-width=".35" points="898.2,171.7 911.7,158.2 908,162.2"/>
<polygon fill="#e6d264" stroke="#e6d264" stroke-width=".35" points="898.2,171.7 908,162.2 920,165.2"/>
<polygon fill="#e6d264" stroke="#e6d264" stroke-width=".35" points="898.2,171.7 920,165.2 914,164.8"/>
<polygon fill="#e6d264" stroke="#e6d264" stroke-width=".35" points="898.2,171.7 914,164.8 909.5,171.2"/>
<polygon fill="#62d2cc" stroke="#62d2cc" stroke-width=".35" points="873.5,166 890,166 885.5,167.8 875,168.7 873.8,175 873.2,175"/>
<polygon fill="#e6d264" stroke="#e6d264" stroke-width=".35" points="882.5,141.7 885.8,141.4 886.1,143.5 882.8,143.8"/>
<polygon fill="#f0a86a" stroke="#f0a86a" stroke-width=".35" points="890.7,172 894.8,171.1 897.5,176.8 892.2,178 890,175"/>
<polygon fill="#8c8ef0" stroke="#8c8ef0" stroke-width=".35" points="889.7,178.3 897.5,176.8 902,182.2 896,187.3 890.7,184 889.2,180.2"/>
<polygon fill="#b8e0f0" stroke="#b8e0f0" stroke-width=".35" points="896,187.3 902,182.2 905,184 897.5,188.8"/>
<polygon fill="#a6e27c" stroke="#a6e27c" stroke-width=".35" points="894.8,188.5 905,184 908.3,188.5 906.8,193 902,194.2"/>
<polygon fill="#62d2cc" stroke="#62d2cc" stroke-width=".35" points="904.4,194.2 907.7,193.3 908.3,197.8 905.3,197.8"/>
<polygon fill="#d6e266" stroke="#d6e266" stroke-width=".35" points="873.5,198.2 878.3,202 880.5,205.7 878.3,206.8 875,202.3"/>
<polygon fill="#e47ad6" stroke="#e47ad6" stroke-width=".35" points="879.8,208.7 882.5,210.2 881.7,212.5 880.2,211"/>
<polygon fill="#a6e27c" stroke="#a6e27c" stroke-width=".35" points="881.4,211 884.7,212.5 884,214.3 882,213.2"/>
<polygon fill="#e47ad6" stroke="#e47ad6" stroke-width=".35" points="884,217 890.7,220 890,226 886.2,225.2"/>
<polygon fill="#6fe0a6" stroke="#6fe0a6" stroke-width=".35" points="890.7,220 897.2,222.2 894.8,226 890,226"/>
<polygon fill="#62d2cc" stroke="#62d2cc" stroke-width=".35" points="885.8,225.2 889.2,226 888.5,228.2 886.2,227.5"/>
<polygon fill="#b088e6" stroke="#b088e6" stroke-width=".35" points="889.2,229.7 892.5,229 894.8,232.3 891.2,233.8"/>
<polygon fill="#62d2cc" stroke="#62d2cc" stroke-width=".35" points="891.2,233.8 894.8,232.3 897,235.7 897.5,238.7 892.2,240.2 893.3,235.7"/>
<polygon fill="#f0a86a" stroke="#f0a86a" stroke-width=".35" points="887,242.5 890.7,240.7 891.2,250.3 888.5,248.8"/>
<polygon fill="#e6d264" stroke="#e6d264" stroke-width=".35" points="890.7,240.7 894.2,239.5 894.8,250.3 891.2,250.3"/>
<polygon fill="#f0a86a" stroke="#f0a86a" stroke-width=".35" points="894.2,239.5 897.5,238.7 898.2,249.2 894.8,250.3"/>
<polygon fill="#a6e27c" stroke="#a6e27c" stroke-width=".35" points="897.5,238.7 899.3,247 899.6,247.6 898.2,249.2"/>
<polygon fill="#a6e27c" stroke="#a6e27c" stroke-width=".35" points="884.7,248.5 888.5,247.7 890.7,251.2 886.2,253.3 884,251.5"/>
<polygon fill="#e6e2a0" stroke="#e6e2a0" stroke-width=".35" points="878.7,247.7 883.2,247 884.3,250.7 880.2,251.8"/>
<polygon fill="#e47ad6" stroke="#e47ad6" stroke-width=".35" points="876.2,250.7 880.2,251.8 882.5,254.5 878,256"/>
<polygon fill="#e6d264" stroke="#e6d264" stroke-width=".35" points="873.9,254.2 878,253 880.2,256.7 875,257.8"/>
<polygon fill="#f0876f" stroke="#f0876f" stroke-width=".35" points="876.5,257.8 880.2,256.7 881,260.2 877.7,260.5"/>
<polygon fill="#66d670" stroke="#66d670" stroke-width=".35" points="878,262 880.2,261.7 880.4,263.8 878.3,263.8"/>
<polygon fill="#c6a040" stroke="#c6a040" stroke-width=".35" points="875.6,274.3 877.7,274 877.7,276.4 875.9,276.4"/>
<polygon fill="#f07f9a" stroke="#f07f9a" stroke-width=".35" points="875.4,320 878.3,319.7 879.2,323 876.2,323.3"/>
<polygon fill="#6fe0a6" stroke="#6fe0a6" stroke-width=".35" points="875.7,324.2 878,323.9 878,326.7 875.9,326.7"/>
<polygon fill="#e47ad6" stroke="#e47ad6" stroke-width=".35" points="875.7,332.7 879.5,330.5 882.5,333.5 881,336.8 876.8,336.5"/>
<polygon fill="#f0a86a" stroke="#f0a86a" stroke-width=".35" points="878.7,329.3 881.3,329 881.9,332 879.5,332"/>
<polygon fill="#62d2cc" stroke="#62d2cc" stroke-width=".35" points="876.2,336.8 880.2,336.8 879.5,339.8 876.8,339.5"/>
<polygon fill="#66d670" stroke="#66d670" stroke-width=".35" points="873.2,332 875,331.7 875,334.2 873.2,334.2"/>
<polygon fill="#f07f9a" stroke="#f07f9a" stroke-width=".35" points="873.8,355.7 877.7,354.2 879.5,355.4 876.2,357.8 873.8,357.5"/>
<polygon fill="#8c8ef0" stroke="#8c8ef0" stroke-width=".35" points="885.8,353 889.2,352.2 889.7,356 886.7,356.7"/>
<polygon fill="#f0876f" stroke="#f0876f" stroke-width=".35" points="885.2,358.7 887.7,358.2 887.7,361.2 885.5,361.2"/>
<polygon fill="#62d2cc" stroke="#62d2cc" stroke-width=".35" points="882.5,368 885.2,368 885.2,370.4 882.5,370.4"/>
<polygon fill="#e6d264" stroke="#e6d264" stroke-width=".35" points="888.5,367.7 894.2,367.2 894.8,369.2 889.2,369.8"/>
<polygon fill="#62d2cc" stroke="#62d2cc" stroke-width=".35" points="903.5,377 905.7,376.2 906.2,379.7 903.9,380"/>
<polygon fill="#a6e27c" stroke="#a6e27c" stroke-width=".35" points="895.2,381.2 897.5,380.9 897.5,383.3 895.4,383.3"/>
<polygon fill="#f0a86a" stroke="#f0a86a" stroke-width=".35" points="875,386 878.7,384.8 879.5,386.7 875.7,388.2"/>
<polygon fill="#62d2cc" stroke="#62d2cc" stroke-width=".35" points="878.7,384.5 883.7,382.7 884,386 879.5,386.9"/>
<polygon fill="#b088e6" stroke="#b088e6" stroke-width=".35" points="874.2,388.2 878,387.2 877.7,389.7 874.5,390.5"/>
<polygon fill="#6fe0a6" stroke="#6fe0a6" stroke-width=".35" points="896.7,360.5 903.5,360.2 905,365 901.2,366.2 897.8,364.2"/>
<polygon fill="#f07f9a" stroke="#f07f9a" stroke-width=".35" points="899.7,366.5 905,365 908,368 905,371 900.5,369.5"/>
<polygon fill="#e47ad6" stroke="#e47ad6" stroke-width=".35" points="926,376.2 905,371 909.5,366.8"/>
<polygon fill="#b088e6" stroke="#b088e6" stroke-width=".35" points="926,376.2 909.5,366.8 914,364.2"/>
<polygon fill="#7fd0f0" stroke="#7fd0f0" stroke-width=".35" points="926,376.2 914,364.2 918.5,365.3"/>
<polygon fill="#e47ad6" stroke="#e47ad6" stroke-width=".35" points="926,376.2 918.5,365.3 923,366.5"/>
<polygon fill="#a6e27c" stroke="#a6e27c" stroke-width=".35" points="926,376.2 923,366.5 927.5,368.7"/>
<polygon fill="#c6e266" stroke="#c6e266" stroke-width=".35" points="926,376.2 927.5,368.7 932,371"/>
<polygon fill="#e47ad6" stroke="#e47ad6" stroke-width=".35" points="926,376.2 932,371 936.5,375.5"/>
<polygon fill="#f07f9a" stroke="#f07f9a" stroke-width=".35" points="926,376.2 936.5,375.5 941.7,378.5"/>
<polygon fill="#7fd0f0" stroke="#7fd0f0" stroke-width=".35" points="926,376.2 941.7,378.5 939.5,383"/>
<polygon fill="#b088e6" stroke="#b088e6" stroke-width=".35" points="926,376.2 939.5,383 930.5,383"/>
<polygon fill="#e6d264" stroke="#e6d264" stroke-width=".35" points="926,376.2 930.5,383 924.5,387.8"/>
<polygon fill="#f0a86a" stroke="#f0a86a" stroke-width=".35" points="926,376.2 924.5,387.8 920,386"/>
<polygon fill="#e6d264" stroke="#e6d264" stroke-width=".35" points="926,376.2 920,386 914,384.8"/>
<polygon fill="#7fd0f0" stroke="#7fd0f0" stroke-width=".35" points="926,376.2 914,384.8 917,380"/>
<polygon fill="#62d2cc" stroke="#62d2cc" stroke-width=".35" points="926,376.2 917,380 915.5,375.5"/>
<polygon fill="#b088e6" stroke="#b088e6" stroke-width=".35" points="926,376.2 915.5,375.5 909.5,371.7"/>
<polygon fill="#e47ad6" stroke="#e47ad6" stroke-width=".35" points="926,376.2 909.5,371.7 905,371"/>
<polygon fill="#f0a86a" stroke="#f0a86a" stroke-width=".35" points="938,382.2 941.7,380.7 944,387.5 940.2,386"/>
<polygon fill="#a6e27c" stroke="#a6e27c" stroke-width=".35" points="940.2,386 944,387.5 945.5,389.3 941.7,389.3"/>
<polygon fill="#b088e6" stroke="#b088e6" stroke-width=".35" points="941.7,389.3 945.5,389.3 948.2,391.7 944,391.1"/>
<polygon fill="#f0a86a" stroke="#f0a86a" stroke-width=".35" points="943.7,376.2 950,375.5 951.8,377.6 945.5,378.3"/>
<polygon fill="#b088e6" stroke="#b088e6" stroke-width=".35" points="950,375.5 954.5,371.7 956.3,373.2 951.8,377.6"/>
<polygon fill="#f0a86a" stroke="#f0a86a" stroke-width=".35" points="961.2,376.7 962.9,377.1 962.7,378.7 961.1,378.3"/>
<polygon fill="#c04a6a" stroke="#c04a6a" stroke-width=".35" points="967.2,383.2 968.9,383.6 968.7,385.2 967.1,384.8"/>
<polygon fill="#6fe0a6" stroke="#6fe0a6" stroke-width=".35" points="971.7,382.7 973.4,383.1 973.2,384.7 971.6,384.3"/>
<polygon fill="#62d2cc" stroke="#62d2cc" stroke-width=".35" points="974.4,387.7 976.1,388.1 975.9,389.7 974.3,389.3"/>
<polygon fill="#e6d264" stroke="#e6d264" stroke-width=".35" points="976.9,385.7 978.6,386.1 978.4,387.7 976.8,387.3"/>
<polygon fill="#62d2cc" stroke="#62d2cc" stroke-width=".35" points="978.9,391 980.6,391.4 980.4,393 978.8,392.6"/>
<polygon fill="#62d2cc" stroke="#62d2cc" stroke-width=".35" points="953.7,368.5 955.4,368.9 955.2,370.5 953.6,370.1"/>
<polygon fill="#8c8ef0" stroke="#8c8ef0" stroke-width=".35" points="949.2,366.2 950.9,366.6 950.7,368.2 949.1,367.8"/>
<polygon fill="#f07f9a" stroke="#f07f9a" stroke-width=".35" points="940.2,363.7 941.9,364.1 941.7,365.7 940.1,365.3"/>
<polygon fill="#6fe0a6" stroke="#6fe0a6" stroke-width=".35" points="896.7,460.7 873.5,457.7 875.7,445"/>
<polygon fill="#b4dc66" stroke="#b4dc66" stroke-width=".35" points="896.7,460.7 875.7,445 873.5,434.5"/>
<polygon fill="#b4dc66" stroke="#b4dc66" stroke-width=".35" points="896.7,460.7 873.5,434.5 873.5,409"/>
<polygon fill="#b4dc66" stroke="#b4dc66" stroke-width=".35" points="896.7,460.7 873.5,409 881,403"/>
<polygon fill="#f0a86a" stroke="#f0a86a" stroke-width=".35" points="896.7,460.7 881,403 884.7,406"/>
<polygon fill="#f0a86a" stroke="#f0a86a" stroke-width=".35" points="896.7,460.7 884.7,406 888.5,405.2"/>
<polygon fill="#8c96ec" stroke="#8c96ec" stroke-width=".35" points="896.7,460.7 888.5,405.2 896,405.2"/>
<polygon fill="#8c96ec" stroke="#8c96ec" stroke-width=".35" points="896.7,460.7 896,405.2 905.7,405.2"/>
<polygon fill="#d6e27c" stroke="#d6e27c" stroke-width=".35" points="896.7,460.7 905.7,405.2 911,409.7"/>
<polygon fill="#f0a070" stroke="#f0a070" stroke-width=".35" points="896.7,460.7 911,409.7 915.5,413.5"/>
<polygon fill="#a6e060" stroke="#a6e060" stroke-width=".35" points="896.7,460.7 915.5,413.5 919.2,412.7"/>
<polygon fill="#a6e060" stroke="#a6e060" stroke-width=".35" points="896.7,460.7 919.2,412.7 932,415.7"/>
<polygon fill="#f0a070" stroke="#f0a070" stroke-width=".35" points="896.7,460.7 932,415.7 935,420.2"/>
<polygon fill="#b088e6" stroke="#b088e6" stroke-width=".35" points="896.7,460.7 935,420.2 938,422.5"/>
<polygon fill="#a6e060" stroke="#a6e060" stroke-width=".35" points="896.7,460.7 938,422.5 939.5,426.2"/>
<polygon fill="#f0a070" stroke="#f0a070" stroke-width=".35" points="896.7,460.7 939.5,426.2 941.7,430"/>
<polygon fill="#f0e0a0" stroke="#f0e0a0" stroke-width=".35" points="896.7,460.7 941.7,430 942.2,433"/>
<polygon fill="#62d8c0" stroke="#62d8c0" stroke-width=".35" points="896.7,460.7 942.2,433 944,436"/>
<polygon fill="#f0876f" stroke="#f0876f" stroke-width=".35" points="896.7,460.7 944,436 944.7,439"/>
<polygon fill="#62e0b0" stroke="#62e0b0" stroke-width=".35" points="896.7,460.7 944.7,439 944.3,442"/>
<polygon fill="#62e0b0" stroke="#62e0b0" stroke-width=".35" points="896.7,460.7 944.3,442 943.2,446.5"/>
<polygon fill="#c6e266" stroke="#c6e266" stroke-width=".35" points="896.7,460.7 943.2,446.5 938,457"/>
<polygon fill="#c6e266" stroke="#c6e266" stroke-width=".35" points="896.7,460.7 938,457 932,464.5"/>
<polygon fill="#c6e266" stroke="#c6e266" stroke-width=".35" points="896.7,460.7 932,464.5 926,469.7"/>
<polygon fill="#f0876f" stroke="#f0876f" stroke-width=".35" points="896.7,460.7 926,469.7 923.7,471.2"/>
<polygon fill="#70e090" stroke="#70e090" stroke-width=".35" points="896.7,460.7 923.7,471.2 920,475"/>
<polygon fill="#70e090" stroke="#70e090" stroke-width=".35" points="896.7,460.7 920,475 909.5,479.5"/>
<polygon fill="#62d2cc" stroke="#62d2cc" stroke-width=".35" points="896.7,460.7 909.5,479.5 905,480.2"/>
<polygon fill="#f0876f" stroke="#f0876f" stroke-width=".35" points="896.7,460.7 905,480.2 902,480.2"/>
<polygon fill="#f0876f" stroke="#f0876f" stroke-width=".35" points="896.7,460.7 902,480.2 895.2,476.5"/>
<polygon fill="#b088e6" stroke="#b088e6" stroke-width=".35" points="887,461.5 896.7,460.7 894.5,463 887.7,466.7"/>
<polygon fill="#62d2cc" stroke="#62d2cc" stroke-width=".35" points="894.5,463 896.7,460.7 897.5,470.5 895.2,469"/>
<polygon fill="#f0a86a" stroke="#f0a86a" stroke-width=".35" points="877.7,405.2 881,402.7 884.7,406 878,407.5"/>
<polygon fill="#e47ad6" stroke="#e47ad6" stroke-width=".35" points="888.5,405.2 890.7,401.2 905,404.5 905.7,405.5"/>
<polygon fill="#6fe0a6" stroke="#6fe0a6" stroke-width=".35" points="890.7,401.2 892.2,396.2 897.5,394.7 903.5,397 905,404.5"/>
<polygon fill="#8cb0f0" stroke="#8cb0f0" stroke-width=".35" points="897.5,394.7 908,397.7 905.7,404.2 902.7,398.5"/>
<polygon fill="#e6d264" stroke="#e6d264" stroke-width=".35" points="919.2,412.7 921.5,407.5 922.7,403.7 930.8,404.2 932,415.7"/>
<polygon fill="#f0a070" stroke="#f0a070" stroke-width=".35" points="919.2,412.7 932,412 932,415.7 920,414.7"/>
<polygon fill="#b088e6" stroke="#b088e6" stroke-width=".35" points="922.7,403.7 923.7,397.7 927.2,397.7 928.2,403.7"/>
<polygon fill="#6fe0a6" stroke="#6fe0a6" stroke-width=".35" points="923.7,397.7 925.2,392.2 927.2,397.7"/>
<polygon fill="#b4e060" stroke="#b4e060" stroke-width=".35" points="899.7,488 907.7,487 905.7,492.2 902.3,494.2 899.3,492.2"/>
<polygon fill="#62d2cc" stroke="#62d2cc" stroke-width=".35" points="907.7,487 909.8,486.5 908.3,490 906.5,490.7"/>
<polygon fill="#f0876f" stroke="#f0876f" stroke-width=".35" points="899,492.2 902.3,494.2 900.5,494.9"/>
<polygon fill="#62e0b0" stroke="#62e0b0" stroke-width=".35" points="944.7,502.4 947.7,500.2 948.8,502.7 946.2,504.4"/>
<polygon fill="#a070e8" stroke="#a070e8" stroke-width=".35" points="947.7,500.2 954.5,496.7 956,500.5 949.7,504.5 948.5,502.7"/>
<polygon fill="#f07070" stroke="#f07070" stroke-width=".35" points="954.5,496.7 960.8,494.2 962,497.2 956,500.5"/>
<polygon fill="#a070e8" stroke="#a070e8" stroke-width=".35" points="960.8,494.2 965,492.2 966.2,494.8 962,497.2"/>
<polygon fill="#62d2cc" stroke="#62d2cc" stroke-width=".35" points="965,492.2 968.3,489.7 969.5,492.2 966.2,494.8"/>
<polygon fill="#b4e060" stroke="#b4e060" stroke-width=".35" points="968.3,489.7 971.3,487 974,487.9 971.7,490.9 969.5,492.2"/>
<polygon fill="#6fe0a6" stroke="#6fe0a6" stroke-width=".35" points="977,487.9 980,482.5 983,484 980,487.3"/>
<polygon fill="#62d2cc" stroke="#62d2cc" stroke-width=".35" points="978.8,482.5 982.2,481 983.3,484 980,484.7"/>
<polygon fill="#e47ad6" stroke="#e47ad6" stroke-width=".35" points="981.8,479.5 985.2,477.2 986.7,481 983.3,483.7"/>
<polygon fill="#b088e6" stroke="#b088e6" stroke-width=".35" points="984.2,475 987.5,474.7 987.8,478.7 985.2,479.5"/>
<polygon fill="#b4e060" stroke="#b4e060" stroke-width=".35" points="987.5,477.7 992.7,476.9 989.3,481 987.5,480.7"/>
<polygon fill="#f0a86a" stroke="#f0a86a" stroke-width=".35" points="984.8,473.2 987.5,472.7 987.5,475 984.8,475.3"/>
<polygon fill="#e47ad6" stroke="#e47ad6" stroke-width=".35" points="984.5,468.2 987.5,467.5 987.5,472.7 985.1,473.2"/>
<polygon fill="#f07f9a" stroke="#f07f9a" stroke-width=".35" points="1017.2,413.2 1020.5,412.3 1021.2,414.7 1017.8,415.6"/>
<polygon fill="#e6d264" stroke="#e6d264" stroke-width=".35" points="1022,409.7 1025.7,409 1025.9,411.4 1022.6,412"/>
<polygon fill="#c6e266" stroke="#c6e266" stroke-width=".35" points="990.2,405.7 992.3,405.4 992.3,407.5 990.2,407.5"/>
<polygon fill="#b088e6" stroke="#b088e6" stroke-width=".35" points="343.5,474.9 361.5,474.9 366.2,480 344.7,480"/>
<polygon fill="#f0a86a" stroke="#f0a86a" stroke-width=".35" points="361.5,474.9 385.5,474.9 381.7,480 366.2,480"/>
<polygon fill="#f07070" stroke="#f07070" stroke-width=".35" points="344.7,480 365.5,480 357.4,482.2 345,482.2"/>
<polygon fill="#c6e266" stroke="#c6e266" stroke-width=".35" points="365.5,480 381.7,480 374.2,482.2 357.4,482.2"/>
<polygon fill="#6fe0a6" stroke="#6fe0a6" stroke-width=".35" points="345,482.2 356.6,482.2 362.6,487.5 345.7,487.5"/>
<polygon fill="#e47ad6" stroke="#e47ad6" stroke-width=".35" points="356.6,482.2 374.2,482.2 373.5,487.5 362.6,487.5"/>
<polygon fill="#8c8ef0" stroke="#8c8ef0" stroke-width=".35" points="345.7,487.5 361.9,487.5 356.2,489.7 346.8,489.7"/>
<polygon fill="#62d8e8" stroke="#62d8e8" stroke-width=".35" points="361.9,487.5 373.5,487.5 370.2,489.7 356.2,489.7"/>
<polygon fill="#62d2cc" stroke="#62d2cc" stroke-width=".35" points="346.8,489.7 355.5,489.7 363.4,496.5 350.2,496.5"/>
<polygon fill="#b088e6" stroke="#b088e6" stroke-width=".35" points="355.5,489.7 370.2,489.7 370.5,496.5 363.4,496.5"/>
<polygon fill="#f0a86a" stroke="#f0a86a" stroke-width=".35" points="350.2,496.5 362.6,496.5 357,501 348.7,501"/>
<polygon fill="#e6d264" stroke="#e6d264" stroke-width=".35" points="362.6,496.5 370.5,496.5 369.7,501 357,501"/>
<polygon fill="#c6e266" stroke="#c6e266" stroke-width=".35" points="348.7,501 356.2,501 362.4,504.3 349.5,504.3"/>
<polygon fill="#f0876f" stroke="#f0876f" stroke-width=".35" points="356.2,501 369.7,501 369.3,504.3 362.4,504.3"/>
<polygon fill="#e47ad6" stroke="#e47ad6" stroke-width=".35" points="349.5,504.3 361.6,504.3 358.5,508.5 350.2,508.5"/>
<polygon fill="#b088e6" stroke="#b088e6" stroke-width=".35" points="361.6,504.3 369.3,504.3 371.2,508.5 358.5,508.5"/>
<polygon fill="#62d8e8" stroke="#62d8e8" stroke-width=".35" points="350.2,508.5 357.7,508.5 363.5,513 351.7,513"/>
<polygon fill="#f07070" stroke="#f07070" stroke-width=".35" points="357.7,508.5 371.2,508.5 369.3,513 363.5,513"/>
<polygon fill="#b088e6" stroke="#b088e6" stroke-width=".35" points="351.7,513 362.8,513 358.5,516.7 352.8,516.7"/>
<polygon fill="#6fe0a6" stroke="#6fe0a6" stroke-width=".35" points="362.8,513 369.3,513 368.7,516.7 358.5,516.7"/>
<polygon fill="#e6d264" stroke="#e6d264" stroke-width=".35" points="352.8,516.7 357.7,516.7 365.7,520.2 356.7,520.2"/>
<polygon fill="#8c8ef0" stroke="#8c8ef0" stroke-width=".35" points="357.7,516.7 368.7,516.7 368.7,520.2 365.7,520.2"/>
<polygon fill="#f0876f" stroke="#f0876f" stroke-width=".35" points="356.7,520.2 364.9,520.2 365.8,525 362.7,525"/>
<polygon fill="#62d2cc" stroke="#62d2cc" stroke-width=".35" points="364.9,520.2 368.7,520.2 373.5,525 365.8,525"/>
<polygon fill="#66d670" stroke="#66d670" stroke-width=".35" points="343.5,474.9 349.5,474.9 350.2,480 345,481.2"/>
<polygon fill="#f07070" stroke="#f07070" stroke-width=".35" points="364.5,474.9 378,474.9 373.5,484.5 360,483"/>
<polygon fill="#6fe0a6" stroke="#6fe0a6" stroke-width=".35" points="375,474.9 385.5,474.9 381.7,480 375,480.7"/>
<path d="M880 323.2H1020" stroke="#a05070" stroke-width=".8" fill="none" opacity=".75"/>
<path d="M534.3 474V526" stroke="#6cc27a" stroke-width=".8" fill="none" opacity=".8"/>
</svg>

<div class="a" style="left:0;top:0;width:854px;height:8px;background:#1d2229"></div>
<div class="a" style="left:0;top:0;width:8px;height:447px;background:#1d2229"></div>
<svg style="left:0;top:0" width="853.5" height="446.7" viewBox="172.5 78.3 853.5 446.7">
<path d="M181.2 84.3V86.3M187.4 84.3V86.3M193.6 81.8V86.3M199.7 84.3V86.3M205.9 84.3V86.3M212.1 84.3V86.3M218.3 84.3V86.3M224.5 78.3V86.3M230.7 84.3V86.3M236.9 84.3V86.3M243.1 84.3V86.3M249.3 84.3V86.3M255.5 81.8V86.3M261.6 84.3V86.3M267.8 84.3V86.3M274.0 84.3V86.3M280.2 84.3V86.3M286.4 78.3V86.3M292.6 84.3V86.3M298.8 84.3V86.3M305.0 84.3V86.3M311.2 84.3V86.3M317.4 81.8V86.3M323.5 84.3V86.3M329.7 84.3V86.3M335.9 84.3V86.3M342.1 84.3V86.3M348.3 78.3V86.3M354.5 84.3V86.3M360.7 84.3V86.3M366.9 84.3V86.3M373.1 84.3V86.3M379.2 81.8V86.3M385.4 84.3V86.3M391.6 84.3V86.3M397.8 84.3V86.3M404.0 84.3V86.3M410.2 78.3V86.3M416.4 84.3V86.3M422.6 84.3V86.3M428.8 84.3V86.3M435.0 84.3V86.3M441.2 81.8V86.3M447.3 84.3V86.3M453.5 84.3V86.3M459.7 84.3V86.3M465.9 84.3V86.3M472.1 78.3V86.3M478.3 84.3V86.3M484.5 84.3V86.3M490.7 84.3V86.3M496.9 84.3V86.3M503.1 81.8V86.3M509.2 84.3V86.3M515.4 84.3V86.3M521.6 84.3V86.3M527.8 84.3V86.3M534.0 78.3V86.3M540.2 84.3V86.3M546.4 84.3V86.3M552.6 84.3V86.3M558.8 84.3V86.3M565.0 81.8V86.3M571.1 84.3V86.3M577.3 84.3V86.3M583.5 84.3V86.3M589.7 84.3V86.3M595.9 78.3V86.3M602.1 84.3V86.3M608.3 84.3V86.3M614.5 84.3V86.3M620.7 84.3V86.3M626.9 81.8V86.3M633.0 84.3V86.3M639.2 84.3V86.3M645.4 84.3V86.3M651.6 84.3V86.3M657.8 78.3V86.3M664.0 84.3V86.3M670.2 84.3V86.3M676.4 84.3V86.3M682.6 84.3V86.3M688.8 81.8V86.3M694.9 84.3V86.3M701.1 84.3V86.3M707.3 84.3V86.3M713.5 84.3V86.3M719.7 78.3V86.3M725.9 84.3V86.3M732.1 84.3V86.3M738.3 84.3V86.3M744.5 84.3V86.3M750.6 81.8V86.3M756.8 84.3V86.3M763.0 84.3V86.3M769.2 84.3V86.3M775.4 84.3V86.3M781.6 78.3V86.3M787.8 84.3V86.3M794.0 84.3V86.3M800.2 84.3V86.3M806.4 84.3V86.3M812.5 81.8V86.3M818.7 84.3V86.3M824.9 84.3V86.3M831.1 84.3V86.3M837.3 84.3V86.3M843.5 78.3V86.3M849.7 84.3V86.3M855.9 84.3V86.3M862.1 84.3V86.3M868.3 84.3V86.3M874.4 81.8V86.3M880.6 84.3V86.3M886.8 84.3V86.3M893.0 84.3V86.3M899.2 84.3V86.3M905.4 78.3V86.3M911.6 84.3V86.3M917.8 84.3V86.3M924.0 84.3V86.3M930.2 84.3V86.3M936.4 81.8V86.3M942.5 84.3V86.3M948.7 84.3V86.3M954.9 84.3V86.3M961.1 84.3V86.3M967.3 78.3V86.3M973.5 84.3V86.3M979.7 84.3V86.3M985.9 84.3V86.3M992.1 84.3V86.3M998.2 81.8V86.3M1004.4 84.3V86.3M1010.6 84.3V86.3M1016.8 84.3V86.3M1023.0 84.3V86.3" stroke="#8a8f98" stroke-width=".7" fill="none"/>
<path d="M178.5 88.5H180.5M178.5 94.7H180.5M178.5 100.9H180.5M176.0 107.1H180.5M178.5 113.2H180.5M178.5 119.4H180.5M178.5 125.6H180.5M178.5 131.8H180.5M172.5 138.0H180.5M178.5 144.2H180.5M178.5 150.4H180.5M178.5 156.6H180.5M178.5 162.8H180.5M176.0 168.9H180.5M178.5 175.1H180.5M178.5 181.3H180.5M178.5 187.5H180.5M178.5 193.7H180.5M172.5 199.9H180.5M178.5 206.1H180.5M178.5 212.3H180.5M178.5 218.5H180.5M178.5 224.7H180.5M176.0 230.9H180.5M178.5 237.0H180.5M178.5 243.2H180.5M178.5 249.4H180.5M178.5 255.6H180.5M172.5 261.8H180.5M178.5 268.0H180.5M178.5 274.2H180.5M178.5 280.4H180.5M178.5 286.6H180.5M176.0 292.8H180.5M178.5 298.9H180.5M178.5 305.1H180.5M178.5 311.3H180.5M178.5 317.5H180.5M172.5 323.7H180.5M178.5 329.9H180.5M178.5 336.1H180.5M178.5 342.3H180.5M178.5 348.5H180.5M176.0 354.6H180.5M178.5 360.8H180.5M178.5 367.0H180.5M178.5 373.2H180.5M178.5 379.4H180.5M172.5 385.6H180.5M178.5 391.8H180.5M178.5 398.0H180.5M178.5 404.2H180.5M178.5 410.4H180.5M176.0 416.5H180.5M178.5 422.7H180.5M178.5 428.9H180.5M178.5 435.1H180.5M178.5 441.3H180.5M172.5 447.5H180.5M178.5 453.7H180.5M178.5 459.9H180.5M178.5 466.1H180.5M178.5 472.3H180.5M176.0 478.4H180.5M178.5 484.6H180.5M178.5 490.8H180.5M178.5 497.0H180.5M178.5 503.2H180.5M172.5 509.4H180.5M178.5 515.6H180.5M178.5 521.8H180.5" stroke="#8a8f98" stroke-width=".7" fill="none"/>
<text x="906.6" y="84.6" font-family="Liberation Sans,sans-serif" font-size="4.6" fill="#9a9fa8">3000</text>
<text x="968.5" y="84.6" font-family="Liberation Sans,sans-serif" font-size="4.6" fill="#9a9fa8">3500</text>
<text transform="translate(179.2 508.2) rotate(-90)" font-family="Liberation Sans,sans-serif" font-size="4.6" fill="#9a9fa8">1500</text>
</svg>

<div class="a" style="left:848.6px;top:187px;width:3.2px;height:50px;background:#8fb0d2;border-radius:1.5px;opacity:.8"></div>
<div class="a" style="left:410.5px;top:443px;width:70px;height:3px;background:#8fb0d2;border-radius:1.5px;opacity:.8"></div>
</div>
<!-- ===== bottom panel ===== -->
<div class="panel" style="left:170.7px;top:528px;width:856.3px;height:168.5px"></div>
<div class="dark" style="left:173.8px;top:532.2px;width:810.2px;height:138.5px;overflow:hidden">
<div class="t mono" style="left:2.8px;top:-6.20px;font-size:10.7px;letter-spacing:-.45px;-webkit-text-stroke:.2px #d6d8db">Germany</div>
<div class="t mono" style="left:2.8px;top:6.80px;font-size:10.7px;letter-spacing:-.45px;-webkit-text-stroke:.2px #d6d8db">Italy</div>
<div class="t mono" style="left:2.8px;top:19.80px;font-size:10.7px;letter-spacing:-.45px;-webkit-text-stroke:.2px #d6d8db">France</div>
<div class="t mono" style="left:2.8px;top:32.80px;font-size:10.7px;letter-spacing:-.45px;-webkit-text-stroke:.2px #d6d8db">France / French Tunisia</div>
<div class="t mono" style="left:2.8px;top:45.80px;font-size:10.7px;letter-spacing:-.45px;-webkit-text-stroke:.2px #d6d8db">France / French Algeria</div>
<div class="t mono" style="left:2.8px;top:58.80px;font-size:10.7px;letter-spacing:-.45px;-webkit-text-stroke:.2px #d6d8db">France / French West Africa</div>
<div class="t mono" style="left:2.8px;top:71.80px;font-size:10.7px;letter-spacing:-.45px;-webkit-text-stroke:.2px #d6d8db">United Kingdom / British Nigeria</div>
<div class="t mono" style="left:2.8px;top:84.80px;font-size:10.7px;letter-spacing:-.45px;-webkit-text-stroke:.2px #d6d8db">France / French West Africa</div>
<div class="t mono" style="left:2.8px;top:97.80px;font-size:10.7px;letter-spacing:-.45px;-webkit-text-stroke:.2px #d6d8db">France / French Algeria</div>
<div class="t mono" style="left:2.8px;top:110.80px;font-size:10.7px;letter-spacing:-.45px;-webkit-text-stroke:.2px #d6d8db">France / French West Africa</div>
<div class="t mono" style="left:2.8px;top:122.80px;font-size:10.7px;letter-spacing:-.45px;-webkit-text-stroke:.2px #d6d8db">United Kingdom / British Nigeria</div>
</div>
<div class="a" style="left:980.2px;top:535px;width:1px;height:134px;background:#33383f"></div>
<div class="a" style="left:979px;top:575px;width:3.2px;height:94px;background:#6b6f76;border-radius:1.5px"></div>
<svg style="left:992px;top:535.8px" width="8" height="10" viewBox="0 0 8 10"><path d="M4 .4V4.6" stroke="#e0e2e5" stroke-width="1.4"/><path d="M.6 5H7.4V9.4H.6Z" fill="#e0e2e5"/><path d="M.6 7H7.4" stroke="#363d4a" stroke-width=".8"/></svg>
<svg style="left:1011px;top:535.8px" width="10" height="10" viewBox="0 0 10 10"><path d="M7 2.2V1.2Q7 .6 6.4 .6H1.2Q.6 .6 .6 1.2V6.4Q.6 7 1.2 7H2.2" fill="none" stroke="#e0e2e5" stroke-width="1.1"/><rect x="3.2" y="3.2" width="6.2" height="6.2" rx=".8" fill="none" stroke="#e0e2e5" stroke-width="1.4"/><rect x="5" y="5" width="2.6" height="2.6" fill="#e0e2e5"/></svg>
<div class="a" style="left:987px;top:551.5px;width:38px;height:1px;background:#2d333d"></div>
<svg style="left:991px;top:558.8px" width="10" height="9" viewBox="0 0 10 9"><path d="M.4 .8H9.6M4.6 4.2H9.6M4.6 7.8H9.6" stroke="#e0e2e5" stroke-width="1.4"/><path d="M1.8 8.6V3.6M.2 5.2 1.8 3.4 3.4 5.2" fill="none" stroke="#e0e2e5" stroke-width="1.2"/></svg>
<svg style="left:1011.5px;top:559px" width="9" height="9" viewBox="0 0 9 9"><circle cx="3.4" cy="3.4" r="2.5" fill="none" stroke="#e0e2e5" stroke-width="1.3"/><path d="M5.3 5.3 8.3 8.3" stroke="#e0e2e5" stroke-width="1.6"/></svg>
<div class="a" style="left:987px;top:574.5px;width:38px;height:1px;background:#2d333d"></div>
<div class="a" style="left:987px;top:577.7px;width:37.6px;height:22.3px;background:#1f242b;border-radius:2px;border-bottom:2px solid #5b8fc6"></div>
<div class="t" style="left:1006.09px;top:582.03px;font-size:10.6px;letter-spacing:-0.038px;color:#5d9ad6">15</div>
<div class="a" style="left:987px;top:601.7px;width:37.6px;height:21.9px;background:#1f242b;border-radius:2px;border-bottom:2px solid #5b8fc6"></div>
<div class="t" style="left:1008.49px;top:605.73px;font-size:10.6px;letter-spacing:0.633px;color:#5d9ad6">0</div>
<div class="a" style="left:987px;top:625.5px;width:37.6px;height:21.8px;background:#1f242b;border-radius:2px;border-bottom:2px solid #5b8fc6"></div>
<div class="t" style="left:1008.49px;top:629.43px;font-size:10.6px;letter-spacing:0.633px;color:#5d9ad6">0</div>
<div class="a" style="left:987px;top:649.5px;width:37.6px;height:21.5px;background:#1f242b;border-radius:2px;border-bottom:2px solid #5b8fc6"></div>
<div class="t" style="left:1008.49px;top:653.13px;font-size:10.6px;letter-spacing:0.633px;color:#5d9ad6">0</div>
<svg style="left:991.2px;top:584px" width="9" height="10" viewBox="0 0 9 10"><rect x=".3" y=".3" width="8.4" height="9.4" rx="1.2" fill="#e6e7ea"/><path d="M4.5 2V5.8M4.5 7.2V8.4" stroke="#1f242b" stroke-width="1.3"/></svg>
<svg style="left:991px;top:607.6px" width="10" height="10" viewBox="0 0 10 10"><circle cx="5" cy="5" r="4.7" fill="#ff786b"/><path d="M3 3 7 7M7 3 3 7" stroke="#2a1a1a" stroke-width="1.2"/></svg>
<svg style="left:991px;top:631.3px" width="10" height="10" viewBox="0 0 10 10"><circle cx="5" cy="5" r="4.7" fill="#ffe066"/><path d="M5 2.2V5.8M5 7.2V8.2" stroke="#2a2a1a" stroke-width="1.3"/></svg>
<svg style="left:994px;top:655px" width="4" height="10" viewBox="0 0 4 10"><path d="M.6 1.4Q2 0 3.4 1.4V7L2 9.6 .6 7Z" fill="#d0d2d6"/><path d="M2 2.4V6" stroke="#1f242b" stroke-width=".8"/></svg>
<div class="t" style="left:177.50px;top:676.93px;font-size:10.6px;letter-spacing:0.432px;color:#629ad4">Output</div>
<div class="a" style="left:221.3px;top:682px;width:4.4px;height:4.4px;border-radius:50%;background:#f2d462"></div>
<div class="t" style="left:228.13px;top:676.93px;font-size:10.6px;letter-spacing:0.034px;color:#e2cc7c">Debugger (1)</div>
<div class="t" style="left:300.28px;top:676.93px;font-size:10.6px;letter-spacing:0.014px;color:#cfd1d5">Audio</div>
<div class="t" style="left:337.78px;top:676.93px;font-size:10.6px;letter-spacing:0.259px;color:#cfd1d5">Animation</div>
<div class="t" style="left:395.52px;top:676.93px;font-size:10.6px;letter-spacing:0.003px;color:#cfd1d5">Shader Editor</div>
<svg style="left:913.5px;top:679.5px" width="7" height="9" viewBox="0 0 7 9"><path d="M6.6 .6V8.4L.6 5.4Z" fill="#4a505b"/></svg>
<div class="t" style="left:927.76px;top:676.93px;font-size:10.6px;letter-spacing:-0.054px;color:#7d828b">4.4.1.stable</div>
<svg style="left:993px;top:679px" width="7" height="10" viewBox="0 0 7 10"><path d="M1.4 .4H5.6V3.6L6.8 5.4H.2L1.4 3.6Z" fill="#e0e2e5"/><path d="M3.5 5.4V9.6" stroke="#e0e2e5" stroke-width="1.1"/></svg>
<svg style="left:1011px;top:679px" width="10" height="10" viewBox="0 0 10 10"><path d="M.4 1H9.6" stroke="#e0e2e5" stroke-width="1.4"/><path d="M2.8 9.4V4.6M7.2 9.4V4.6M1 6 2.8 4 4.6 6M5.4 6 7.2 4 9 6" fill="none" stroke="#e0e2e5" stroke-width="1.3"/></svg>
<!-- ===== running game window ===== -->
<div class="a" id="gamewin" style="left:173.2px;top:47.4px;width:700.1px;height:427.3px;border-radius:7px 7px 0 0;overflow:hidden;background:#2d3235;box-shadow:0 3px 12px 1px rgba(0,0,0,.33)">
<div class="a" style="left:0;top:0;width:701.4px;height:32.7px;background:#2d3235"></div>
<div class="t b" style="left:296.80px;top:9.13px;font-size:10.6px;letter-spacing:0.117px;color:#f2f2f2">map_game (DEBUG)</div>
<div class="a" style="left:643.6px;top:10.5px;width:12.1px;height:12.1px;border-radius:50%;background:#f09a72;border:.6px solid #8a5a48"></div>
<div class="a" style="left:659.7px;top:10.5px;width:12.1px;height:12.1px;border-radius:50%;background:#a5c873;border:.6px solid #607548"></div>
<div class="a" style="left:675.8px;top:10.5px;width:12.1px;height:12.1px;border-radius:50%;background:#f07479;border:.6px solid #8a484c"></div>
<div class="a" style="left:0;top:32.7px;width:701.4px;height:394.6px;background:#fff"></div>
<svg style="left:0;top:50.3px" width="700.4" height="375.2" viewBox="173.2 97.7 700.4 375.2">
<rect x="172" y="97" width="703" height="377" fill="#45729e"/>
<g stroke-width=".5" stroke-linejoin="round">
<polygon fill="#e6898f" stroke="#8e5458" points="298,145 310,146 320,145 328,146 334,148 343,149 350,148 360,147 364,145 368,143 372,145 374,149 376,152 373,154 370,156 367,157 363,157 358,158 353,164 351,167 353,171 358,173 364,175 365,179 364,182 367,184 371,180 372,177 376,175 379,169 380,163 382,160 388,160.5 392,163 394,167 399,166 402,168 403,172 407,176 409,179 410,184 407.6,184 402,186 396,187 390,191 396,193 390,199 384,198 382,194 370,199 360,201 353,205 357,198 350,193 342,191 338,189 286,189 284,183 281,179 282,173 279,164"/>
<polygon fill="#e6898f" stroke="#8e5458" points="327.5,141 331,137.5 340,136.5 345,139 353,138.5 358,138 357,142 355,145 350,146 344,147 336,146 334,143 330,142.5"/>
<polygon fill="#e6898f" stroke="#8e5458" points="341,133 348,131 353,132 360,131 363,134 358,136 350,136 343,134.5"/>
<polygon fill="#e6898f" stroke="#8e5458" points="367,132 372,128 376,130 380,129 382,133 390,133.5 396,134 394,136 382,136 376,136.5 370,135"/>
<polygon fill="#e6898f" stroke="#8e5458" points="385,126 390,124.5 398,123.5 410,122.5 420,122 429,122.5 428,124.5 420,126 415,127 410,129 405,131 400,133 393,132.5 388,130"/>
<polygon fill="#e6898f" stroke="#8e5458" points="377,141 382,138 390,137.5 396,138.5 400,141 405,144 408,148 412,150.5 410,153 406,154 404,158 400,160.5 396,159 392,156 396,153 397,149 393,146 388,144 384,145 380,144"/>
<polygon fill="#e6898f" stroke="#8e5458" points="362,139 367,137.5 370,140 367,142 364,141.5"/>
<polygon fill="#e6898f" stroke="#8e5458" points="385,154.5 389,154 390,156 386,156.5"/>
<polygon fill="#b0525f" stroke="#6d323a" points="320.8,151.6 323.8,151.1 326.4,151.8 323.8,153.1 321.2,153.3"/>
<polygon fill="#b0525f" stroke="#6d323a" points="321.4,160.7 325.9,160.2 331.1,160 328.9,161 324.4,162 321.4,161.9"/>
<polygon fill="#b0525f" stroke="#6d323a" points="324.8,167.1 329.3,166.6 329.7,167.2 325.2,167.8"/>
<polygon fill="#b0525f" stroke="#6d323a" points="333.7,170.8 336.7,169.6 337.4,170.3 334.8,171.8"/>
<polygon fill="#b0525f" stroke="#6d323a" points="332.8,179.8 335.1,179.1 337.7,179.3 336.9,182.3 333.6,182.6"/>
<polygon fill="#b0525f" stroke="#6d323a" points="345.4,158.3 347.6,158.2 347.2,159.1 345.8,159.1"/>
<polygon fill="#b0525f" stroke="#6d323a" points="374.5,178.4 377.5,178.3 377.1,179.1 374.9,179.3"/>
<polygon fill="#e6898f" stroke="#8e5458" points="400,189 407,185 411,193 406,194"/>
<polygon fill="#9bcbe0" stroke="#607d8a" points="298,145 290,143.6 279,142.6 270,144 262,146.6 258,150 264,152 256,153 249,154 248,156 254,157 250,161 242,163 239,165 244,166 250,164 256,164 250,170 236,174 226,176.6 236,175.4 250,171.4 258,166.4 266,163.4 272,164 279,164"/>
<polygon fill="#9bcbe0" stroke="#607d8a" points="279,164 282,173 281,179 284,183 286,189 284.4,189 282,184 279,179 280,173 278,167"/>
<polygon fill="#e0656a" stroke="#8a3e41" points="229,153 238,147 246,152 240,155.6 234,156"/>
<polygon fill="#9bcbe0" stroke="#607d8a" points="286,189 338,189 342,191 346,195 344,203 347,200 350,195 353,205 360,201 370,199 382,194 384,198 380,201 370,209 362,215 370,208 362,214 358,220 350,227 347,232 348,238 347,243 345,242 343,236 340,233 332,232 322,233 316,236 313,242 310,239 306,234 298,229 290,228 279,226 275,220 273,212 274,209 280,199"/>
<polygon fill="#7da564" stroke="#4d663e" points="279,226 290,228 298,229 306,234 310,239 313,242 312,246 312,253 316,259 322,258 326,253 332,252.4 330,258 328,260 324,260 321,267 318,265 310,264 302,260 296,256 294,250 290,240 285,230 284,235 287,243 288,248 285,245 281.6,238 280,232"/>
<polygon fill="#ee5f5f" stroke="#933a3a" points="321,267 324,260 328,260 330,264 337,265 338,270 336,276 332,276 329,272 322,270"/>
<polygon fill="#6fc3e6" stroke="#44788e" points="332,277 336,277 339,281 337,282"/>
<polygon fill="#ee5f5f" stroke="#933a3a" points="338,281 344,280 349,282 348,285 342,284"/>
<polygon fill="#6ec6e6" stroke="#447a8e" points="338,249 344,248.6 352,252 357,255 354,256 348,253 341,250.4"/>
<polygon fill="#ee5f5f" stroke="#933a3a" points="358,256.4 362,256 362.4,260 358.4,260"/>
<polygon fill="#b9a3e6" stroke="#72658e" points="362,256.6 368,258 366,260 362.4,260"/>
<polygon fill="#dc97c5" stroke="#885d7a" points="349,258.6 352.4,259 352,260.6 349.2,260.4"/>
<polygon fill="#d3a85e" stroke="#82683a" points="349,282 354,277 360,274.4 359,280 364,284 368,288 369,296 364,300 363,307 358,306 352,302 347,299 350,292 348,286"/>
<polygon fill="#a3b7a3" stroke="#657165" points="360,274.4 368,276 376,277.6 382,280 383,284 384,291 378,293 374,299 370,296 368,288 364,284 359,280"/>
<polygon fill="#e79ac3" stroke="#8f5f78" points="382,283 386,284 389,288 388,294 390,297 386,298 384,292"/>
<polygon fill="#e09a60" stroke="#8a5f3b" points="389,288.4 395,288.4 395,296 390,296.6"/>
<polygon fill="#7899b8" stroke="#4a5e72" points="395,289 399,289.6 401,293 397,296.4 395,296"/>
<polygon fill="#f0a77a" stroke="#94674b" points="342,302 347,299.4 352,302.4 350,308 345,312 342.4,309"/>
<polygon fill="#a3a8a8" stroke="#656868" points="341,312 345,312 350,308 352,302.4 358,306 363,308 358,314 356,320 360,325 366,328 367,340 366,344 361,341 354,336 350,330 352,334 347,326 342,317"/>
<polygon fill="#6dc38e" stroke="#437858" points="363,307 369,296.4 374,299.4 378,293.4 384,292 386,298 397,296.8 401,293.4 404,300 414,304 418,309 428,311 434,315 435,322 430,330 427,340 428,340 424,352 418,356 412,361 410,368 406,376 403,379 400,375 394,372 398,364 397,358 392,354 388,347.6 390,345 384,337 376,330 382,336 375,330 372,325 366,328 360,325 356,320 358,314 363,308"/>
<polygon fill="#bca870" stroke="#746845" points="367,328 372,325 375,330 382,336 376,330 384,337 390,345 388,348 383,348 381,352 374,354 370,352 367,344 367,330"/>
<polygon fill="#8fa3d6" stroke="#586584" points="383,348 388,347.6 392,354 397,358 398,364 392,366 390,360 383,355 381.4,351"/>
<polygon fill="#b5b58f" stroke="#707058" points="394,372 400,375 403,379 400,382.4 394,381 393,376"/>
<polygon fill="#6cb8e8" stroke="#42728f" points="366,344 370,352 372,356 370,364 372,376 371,386 372,396 374,406 376,414 379,421 386,425.6 392,428 390,429 382,426 375,420 371,412 369,402 367,390 366,378 367,366 365.6,354 365,346"/>
<polygon fill="#94a5d0" stroke="#5b6680" points="374,354 381,352.4 383,355 390,360 392,366 398,364.4 394,372 393,381 398,386 397,390 390,392 389,397 385,399 388,404 384,408 387,414 385,421 388,424 392,428 386,425.6 379,421 376,414 374,406 372,396 371,386 372,376 370,364 372,356"/>
<polygon fill="#f0a060" stroke="#94633b" points="320,302.2 321.2,303 320,304 319,303"/>
<polygon fill="#d2d3cf" stroke="#828280" points="417,129 430,124.6 446,122.6 466,122 483,124.6 474,128 476,132 468,138 462,142.6 450,145 444,149 439,155 436.4,157.6 431,154 428,148 431,138 428,133"/>
<polygon fill="#5fc0d8" stroke="#3a7785" points="470,153 476,151.6 484,152.6 485,155 479,157.6 473,157"/>
<polygon fill="#e08fd0" stroke="#8a5880" points="496,169 501,167.6 504,174 509,181 508,185 498,186 501,180 498,175"/>
<polygon fill="#70d890" stroke="#458559" points="489,178 494,175.6 497,179 494,183 489,183"/>
<polygon fill="#d96b6f" stroke="#864244" points="550,146 560,147.4 568,150 564,153 572,149 582,147.4 590,145 602,145 605,139 610,138 616,142 624,136 620,137 632,133 642,131 656,133 662,137 676,138 688,139 696,142 706,140 720,142 732,143 744,146 756,145 768,144 778,149 786,155 791,159 784,162 778,165 774,164 776,169 780,175 783,183 781.6,188 778,183 773,177 769,171 769,162 764,161 760,163 758,166.6 748,166 740,168 739,175 748,178 754,183 758,191 756,199 752,203 748,204 749,193 740,189 732,185 724,181 718,180 716,183 722,192 710,188 700,187 690,186 682,183 674,186 665,188 661,191 656,199 652,207 646,210 650,215 647,210 646,214 640,213 628,220 624,219 612,214 606,212 608.5,214.6 603.4,214.8 596,213.6 592,211.5 594,211 591,209 589,206 584,202 580,198 576,195 573,197.5 568,197.5 566,195 563,194.5 560,197 558,195 556,192 552,191 547,190 548,187 548.5,183 547,179 542.5,176 542,173 545,171 543,169.5 544,167 546,165.5 550,164.5 554,162.5 556,159 552,153 550,146"/>
<polygon fill="#d96b6f" stroke="#864244" points="581,140 585,134 598,132 590,135 585,140 588,143 583,143"/>
<polygon fill="#d96b6f" stroke="#864244" points="752,179 756,183 764,189 767,195 763,191 758,186"/>
<polygon fill="#d96b6f" stroke="#864244" points="692,134 700,133 712,134 706,137 696,136.6"/>
<polygon fill="#8b4a50" stroke="#562d31" points="692,174.6 694,177 692.4,181 689,183.4 690.4,180 692,177"/>
<polygon fill="#8b4a50" stroke="#562d31" points="640,194.4 650,193.6 649.6,195 641,196.2"/>
<polygon fill="#a03848" stroke="#63222c" points="567,195 572,194.5 577,193 575,196 571.5,198 568,197"/>
<polygon fill="#8b7d78" stroke="#564d4a" points="515,162 526,153 528,148 536,144 544,142.6 554,145 548,146 540,147.4 532,151 528,157 526,164 524,167 520,169 516,167 514.5,164"/>
<polygon fill="#5f90e0" stroke="#3a598a" points="532,151 540,147.4 545,153 542,157 534.5,163 535,167 533,172 530.5,174.5 528,172 526,169 526.5,164 526.8,160"/>
<polygon fill="#e6eaea" stroke="#8e9191" points="545,145 550,146 552,153 556,159 554,162.5 549,164.5 544,165 541,163 540,160 543,155"/>
<polygon fill="#e6eaea" stroke="#8e9191" points="521,172 523,170 525,172 527,175 524,176.5 521.5,175"/>
<polygon fill="#e08fd0" stroke="#8a5880" points="496.5,169 501,168 503,171 502.5,175 506,178 509,181 508,184.5 503,185.5 498,186 500,182 498.5,178 499.5,174 497,172"/>
<polygon fill="#70d890" stroke="#458559" points="489,178 493,175.5 496,177 495.5,180.5 493,182.5 489,183"/>
<polygon fill="#e8a040" stroke="#8f6327" points="512,183.5 516,179.5 519,179.5 518,184 517,187 514,186.5"/>
<polygon fill="#909898" stroke="#595e5e" points="518.5,179.5 524,178 525,182 525.5,186 529,188 530,191 524,192 520,190 517.5,187 518.5,184"/>
<polygon fill="#f08070" stroke="#944f45" points="524.5,178 531,177.5 532,182 531.5,185 527,186 525,184"/>
<polygon fill="#e8a0d0" stroke="#8f6380" points="531.5,177.5 537,176 545,178 547,180 548.5,184 547,187.5 542,188 536,186.5 532,185"/>
<polygon fill="#70b8b0" stroke="#45726d" points="529,186.5 532,185.5 536,186.8 542,188.3 546.5,188.5 545,191 540,191 534,190 530,188.5"/>
<polygon fill="#e06060" stroke="#8a3b3b" points="532,190 536.5,190.5 536,193.5 532.5,194 530,192"/>
<polygon fill="#e06070" stroke="#8a3b45" points="518.5,191.5 524,191.8 524,195.5 519,195.5"/>
<polygon fill="#f0b060" stroke="#946d3b" points="536.5,191.5 545,191 546.5,192 545,195.5 539,196 537,194"/>
<polygon fill="#c8b860" stroke="#7c723b" points="545,192 554,191.5 558,195 559.5,198.5 556,200.5 550,201 546,198 545,195.5"/>
<polygon fill="#70d080" stroke="#45804f" points="549,201 557,200 559,203 557,206 550,206 548.5,203.5"/>
<polygon fill="#8098c0" stroke="#4f5e77" points="532,194.5 537,194.5 539,196.2 545,195.8 549,201 548.5,205 545,206.5 542,203.5 538,201 534,198"/>
<polygon fill="#e898c0" stroke="#8f5e77" points="542.5,204 545,204 545.5,209 543.5,209.5"/>
<polygon fill="#a0d0e8" stroke="#63808f" points="545.5,208 550,206.5 556,206 554,208 550,209 551,213 550,216.5 548,215 546.5,211"/>
<polygon fill="#70b070" stroke="#456d45" points="519.5,197 522,195 530,193.5 532,195 531,198 534,202 538,207 539,211 537,212 534.5,208 530,204 527,201 523,200 520,199"/>
<polygon fill="#70b070" stroke="#456d45" points="530.5,214 535,213.5 534.5,216 531.5,216.5"/>
<polygon fill="#70b070" stroke="#456d45" points="522,207 524.5,207 524.5,211.5 522.2,211.5"/>
<polygon fill="#6c97c4" stroke="#425d79" points="522.8,204 524,204 524,206 522.8,206"/>
<polygon fill="#6c97c4" stroke="#425d79" points="498.5,190 503,188.5 509,185 512,184 514,186.5 517.5,187.5 520,190 518.5,193 519,196 520,199 517,202 513,201.5 508,203 505,201 504.5,196 501.5,193"/>
<polygon fill="#e89a5a" stroke="#8f5f37" points="489.5,202 495,201 505,202.5 512,204 509,208 506,212 504,216 500,218 495,218.5 493,215.5 493.5,207 490,205.5"/>
<polygon fill="#6fb080" stroke="#446d4f" points="489.5,205.5 493.5,207 493,215.5 490,215 488.8,211"/>
<polygon fill="#a8c8a0" stroke="#687c63" points="556,208 560,206.5 567,205 575,205.5 584,206.5 590,209 591,213 589,215.5 584,216.5 576,217 569,218 563,217.5 558,214.5 556,211"/>
<polygon fill="#a8c8a0" stroke="#687c63" points="556.5,205.2 560,205 560.5,206.8 557.5,207"/>
<polygon fill="#908880" stroke="#59544f" points="576,217.5 584,216.8 588,216 586,220 584,224 579,225 576,223"/>
<polygon fill="#e06888" stroke="#8a4054" points="575,224 579,225 584,224 581,229 578,231 575.5,229"/>
<polygon fill="#e898d0" stroke="#8f5e80" points="569,219.5 572,219.5 571.8,222 569,221.8"/>
<polygon fill="#a08898" stroke="#63545e" points="584,216 591,212.4 594,220 598,226 601,232 596,233 590,230 584,225 582,220"/>
<polygon fill="#90a490" stroke="#596559" points="591,212 596,213 606,213 612,214.4 624,219.6 625,226 627,233 628,237 630,243 620,242 614,239 608,238 602,232 598,226 594,220"/>
<polygon fill="#70c098" stroke="#45775e" points="578,230 584,228 590,230.4 596,233.4 601,233 604,238 610,245 617,249 616,255 606,259 598,263 593,263 588,258 582,248 576,236"/>
<polygon fill="#e898d0" stroke="#8f5e80" points="610,245 617,243 625,250 623,256 616,262 606,267 600,270 598,263.6 606,259 616,255 617,249"/>
<polygon fill="#f06060" stroke="#943b3b" points="593,263 598,263 600,270 595,272.4 593,268"/>
<polygon fill="#a8d4dc" stroke="#688388" points="624,219.6 640,213.6 643.6,217 642,226 635,232 627,233 625,226"/>
<polygon fill="#7faf78" stroke="#4e6c4a" points="643.6,217 649,216 655,221 650,228 649,236 644,238 646,246 640,243 630,243 628,237 627,233 635,232 642,226"/>
<polygon fill="#f0b070" stroke="#946d45" points="649,236 650,228 655,221 659,222 664,230 672,236 682,239 692,235 698,237 694,243 692,250 688,248 684,252 678,257 671,264 668,274 664,283 660,278 656,268 652,256 650,250 646,253 643,247 646,246 644,238"/>
<polygon fill="#90b8a0" stroke="#597263" points="659,222 676,221 686,226 691,235 682,238 672,235 664,230"/>
<polygon fill="#a0a0d0" stroke="#636380" points="664,232 672,235.6 682,238.4 681.6,240 671.6,237.6 663.6,233.6"/>
<polygon fill="#40a060" stroke="#27633b" points="682,242 688,241 690,249 685,251"/>
<polygon fill="#f06060" stroke="#943b3b" points="669,279 672,280 673.6,286 671,288.4 668.4,285"/>
<polygon fill="#90a890" stroke="#596859" points="664,188.6 674,186 682,183 690,186 700,187 710,188 722,192.4 714,197 708,204 700,205 688,203 678,199 670,194"/>
<polygon fill="#ea7f8d" stroke="#914e57" points="646,210 652,207 656,199 661,191 664,188.6 670,194 678,199 688,203 700,205 708,204 714,197 722,192.4 716,183 718,180 724,181 732,185 740,189 749,193 748,204 744,209 738,213 734,209 730,212 735,217 738,218 740,224 744,230 745,237 740,244 732,250 724,253 716,248 708,250 702,243 698,237 691,235 686,226 676,221 659,222 655,221 649,216 647,210"/>
<polygon fill="#ea7f8d" stroke="#914e57" points="725,256 729,256.4 728.6,260 725.4,259.6"/>
<polygon fill="#a0d0e8" stroke="#63808f" points="746.4,244 749,244.4 748.6,250 746,249.6"/>
<polygon fill="#f06868" stroke="#944040" points="744,209 749,204 750,207 748,213 745,214"/>
<polygon fill="#70b8c0" stroke="#457277" points="748,214 752,214 754.4,220 751,222 749,218"/>
<polygon fill="#e8d0d8" stroke="#8f8085" points="765,198 770,199 775,202 770,205 767,203"/>
<polygon fill="#e8d0d8" stroke="#8f8085" points="769,206 773,208 776,215 776.4,221 770,223 764,225 760,224 758,227 762,230 760,231 757,226 760,222 768,220 772,215 770.4,210"/>
<polygon fill="#88c090" stroke="#547759" points="694,243 698,237 702,243 701.7,240 701.1,244.7 707.6,251.7 706.4,255.2 702.9,257.6 703.5,263.4 699.4,265.2 697,263.4 696.4,257.6 691.8,252.9 692,250"/>
<polygon fill="#90b0a0" stroke="#596d63" points="702.9,257.6 706.4,255.2 709.3,256.4 710.5,259.9 716.9,262.3 719.3,266.4 717.5,270.5 714.6,271.6 710.5,271 708.7,274 708.2,278.7 709.9,283.3 711.7,286.9 710.5,287.4 707.6,283.3 705.8,277.5 706.4,272.8 704.6,269.3 704.1,263.4"/>
<polygon fill="#6c9cd6" stroke="#426084" points="707.6,251.7 712.3,252.3 714.6,256.4 718.1,260.5 721.6,264.6 723.4,268.1 722.2,271.6 719.3,275.1 717.5,276.3 715.2,273.4 717.5,270.5 719.3,266.4 716.9,262.3 710.5,259.9 709.3,256.4"/>
<polygon fill="#d89a70" stroke="#855f45" points="711.1,250 717.5,248.8 721,251.7 719.3,255.2 718.7,257.6 721.6,261.1 725.1,264.6 728.1,269.3 728.1,274.6 725.1,277.5 721,281 719.9,278.7 721.6,276.3 724,272.8 723.4,268.1 721.6,264.6 718.1,260.5 714.6,256.4 712.3,252.3"/>
<polygon fill="#ea7f8d" stroke="#ea7f8d" points="701.1,244.7 701.7,238.8 743.9,238.8 743.3,243.5 740.4,247 736.9,249.4 731,251.1 727.5,252.3 724,251.7 721,251.7 717.5,248.8 711.1,250 707.6,251.7"/>
<polygon fill="#ea7f8d" stroke="#914e57" points="724.6,256.4 727.5,255.2 729.2,257.6 727.5,259.9 725.1,259.3"/>
<polygon fill="#a0d0e8" stroke="#63808f" points="746.2,244.7 748,244.1 748.6,247 747.4,250 746,248.2"/>
<polygon fill="#e8a0c8" stroke="#8f637c" points="710.5,286.9 712.8,286.3 715.8,290.4 718.1,295.1 719.3,298.6 717.5,299.2 714,296.2 711.7,291.5"/>
<polygon fill="#ee6262" stroke="#933c3c" points="700.5,289.8 703.5,289.2 708.7,293.3 713.4,298 718.1,303.3 722.2,306.8 724,310.3 722.2,315 719.3,314.4 715.2,310.3 709.9,304.4 705.2,298.6 701.7,293.9"/>
<polygon fill="#ee6262" stroke="#933c3c" points="721.6,316.1 725.1,315.6 731,316.7 736.9,318.5 741.5,319.7 748.6,320.8 755.6,321.4 762.6,320.8 765,322.6 760.3,323.8 753.3,323.4 745.1,322.6 736.9,321.4 728.7,320.2 722.8,318.5"/>
<polygon fill="#ee6262" stroke="#933c3c" points="754,322 762,320 765,321 758,325"/>
<polygon fill="#ee6262" stroke="#933c3c" points="728.7,299.7 733.3,298 736.9,298.6 741.5,295.1 745.1,292.1 747.4,292.7 748.6,297.4 747.4,302.1 745.1,306.8 742.7,310.3 739.2,311.5 734.5,310.3 731,307.9 729.2,303.8"/>
<polygon fill="#e8a0c8" stroke="#8f637c" points="733.3,298 736.9,295.1 741.5,290.4 743.9,286.9 747.4,287.4 749.2,290.4 746.2,291.5 742.7,293.9 738,298"/>
<polygon fill="#ee6262" stroke="#933c3c" points="749.7,300.9 753.3,298.6 760.3,298 762,299.7 757.9,301.5 754.4,302.1 755.6,304.4 758.5,305.6 756.8,307.9 757.4,312.6 756.8,315 753.8,314.4 752.1,310.3 749.7,307.9 749.2,304.4"/>
<polygon fill="#ee6262" stroke="#933c3c" points="766.1,296.2 769.1,296 769.7,298.6 768.5,303.3 766.7,305.6 765.9,300.9"/>
<polygon fill="#ee6262" stroke="#933c3c" points="763.8,308.5 772,307.9 773.2,310.3 765,310.9"/>
<polygon fill="#ee6262" stroke="#933c3c" points="748.6,259.3 751.5,258.2 753.8,261.1 753.3,265.8 755.6,269.3 757.9,271 757.4,273.4 754.4,272.8 750.9,270.5 749.2,265.8"/>
<polygon fill="#ee6262" stroke="#933c3c" points="754.4,274 760.3,272.8 762,276.3 761.5,279.8 757.9,278.7"/>
<polygon fill="#ee6262" stroke="#933c3c" points="756.8,282.2 761.5,280.4 764.4,283.3 763.8,286.9 760.9,288.6 757.9,286.3 755.6,284.5"/>
<polygon fill="#ee6262" stroke="#933c3c" points="744.5,283.9 749.7,275.1 750.9,274.6 750.3,276.9 745.6,285.1"/>
<polygon fill="#e09848" stroke="#8a5e2c" points="774.3,303.8 777.9,302.7 782.5,305 787.2,306.2 793.1,307.9 794.3,311.5 793.7,322 788.4,320.8 787.2,316.1 782.5,311.5 779,310.3 777.3,307.4"/>
<polygon fill="#90b090" stroke="#596d59" points="794.3,308.5 799,309.7 802.5,312.6 805.4,316.1 808.3,320.8 810.7,324.3 806,323.8 800.1,322.6 794.3,322"/>
<polygon fill="#90b090" stroke="#596d59" points="809.5,315 814.2,313.2 817.1,310.3 816.5,308.5 817.9,311.5 814.8,315 810.7,316.1"/>
<polygon fill="#8fae9c" stroke="#586b60" points="729,381 731,376 730,368 732,360 735,354 744,349 752,343 758,337 764,335 769,337 772,330 782,331 783,336 790,342 793,334 796,328 799,338 802,346 807,354 810,362 809,370 804,378 798,385 790,389 782,391 776,390 773,384 772,380 767,377 760,375.6 750,377 740,380 733,382.4"/>
<polygon fill="#8fae9c" stroke="#586b60" points="777,397 783,396.4 781,401 778,402"/>
<polygon fill="#8faab4" stroke="#58696f" points="834,394 840,388 841,384 842,388 845,390 840,394 836,398"/>
<polygon fill="#8faab4" stroke="#58696f" points="810,408 820,402 830,397 832,399 824,404 815,409 811,409.6"/>
<polygon fill="#e878b8" stroke="#8f4a72" points="822.5,316 825.5,315.8 825.6,318 822.8,318.2"/>
<polygon fill="#e878b8" stroke="#8f4a72" points="827.5,320 830.5,319.8 830.6,322 827.8,322.2"/>
<polygon fill="#e878b8" stroke="#8f4a72" points="832.5,324 835.5,323.8 835.6,326 832.8,326.2"/>
<polygon fill="#e878b8" stroke="#8f4a72" points="841.5,336 844.5,335.8 844.6,338 841.8,338.2"/>
<polygon fill="#e878b8" stroke="#8f4a72" points="862.5,342 865.5,341.8 865.6,344 862.8,344.2"/>
<polygon fill="#e878b8" stroke="#8f4a72" points="865.5,340 868.5,339.8 868.6,342 865.8,342.2"/>
<polygon fill="#6c97c4" stroke="#425d79" points="496,220 504,217 514,217 522,216 527,219 528,226 526,228 525.6,246 536,250 554,256 553,268 552,274 556,280 561,288 558,291 546,291 543,296 541,304 538,312 534,313 532,314 527,306 525,300 526,294 527,290 530,284 535,279 536,272 530,270 517,270.4 514,274 512,284 514,288 510,289 507,289 507,277 500,277 500,290 490,290 485,286 480,280 475,275 473,270 472,260 474,253 480,252.4 480,246 489,241 489,236 487,230 492,223"/>
<polygon fill="#e8a060" stroke="#8f633b" points="474,252.4 480,243 482,238 489,236 489,241 480,246 480,252.4"/>
<polygon fill="#dc97c5" stroke="#885d7a" points="512,284 514,274 517,270.4 530,270 536,272 535,279 530,284 527,290 522,292 518,290 514,288"/>
<polygon fill="#dc97c5" stroke="#885d7a" points="500,277 507,277 508,289 501,290.4"/>
<polygon fill="#dc97c5" stroke="#885d7a" points="479.9,280.3 483.4,279.1 485.2,282 484,285 481.1,284.4"/>
<polygon fill="#b8a8e0" stroke="#72688a" points="484,285 486.4,283.2 489.9,287.3 491,290.8 487.5,289.7"/>
<polygon fill="#3c8c5c" stroke="#255639" points="472.4,271.6 478,272.4 477.6,274.4 472.8,274"/>
<polygon fill="#e8a040" stroke="#8f6327" points="526,297 530,297 530,300 526,300"/>
<polygon fill="#70b080" stroke="#456d4f" points="526,228 534,226 542,231 548,227 555,229 555.6,256 536,250 525.6,246"/>
<polygon fill="#e8c860" stroke="#8f7c3b" points="555.4,229 570,230 573,233 571,234 576,244 579,251.6 556,251.6"/>
<polygon fill="#dc97c5" stroke="#885d7a" points="556,251.6 579,251.6 583,260 586,266 582,268 578,276 575,280 578,288 583,293 570,293 561,288 556,280 552,274 553,268 554,256"/>
<polygon fill="#c0b0e0" stroke="#776d8a" points="578,276 582,268 588,269 592,274 596,279 606,282 600,288 592,293 583,293 578,288 575,280"/>
<polygon fill="#c0b0e0" stroke="#776d8a" points="586,266 590,270 597,277 596,279 592,274 588,269 582,268"/>
<polygon fill="#dc97c5" stroke="#885d7a" points="596.6,277.2 610,275 606,282 596,279.2"/>
<polygon fill="#70c090" stroke="#457759" points="610,275 610,282 606,290 598,298 592,304 591,298 592,293 600,288 606,282"/>
<polygon fill="#dc97c5" stroke="#885d7a" points="570,293 592,293 591,298 592,304 588,310 587,320 588,328 578,329 575,324 570,322 567,316 568,309 570,302"/>
<polygon fill="#45729e" stroke="#2a4661" points="571,302 575,301 576,307 572.4,308"/>
<polygon fill="#d8b860" stroke="#85723b" points="546,291 558,291 570,293 570,302 568,309 567,316 570,322 566,323 567,330 562,328 556,326 554,319 546,318 543,320 540,315 533,315 534,313 538,312 541,304 543,296"/>
<polygon fill="#6fa08c" stroke="#446356" points="533,315 540,316 543,320 547,318 552,319 552.4,326 555.6,328 555,332 551,334 551,343 530,342 532,334 534,326 533,320"/>
<polygon fill="#dc97c5" stroke="#885d7a" points="530,342.4 551,343 551,334 555,332 555.6,328 564,330 565,323 570,321.6 575,324 575.6,334.4 568,336.4 570,339 573,345 570,353 571,361 570,368 564,376 558,380 544,382 542,377 538,368 535,356 533,348"/>
<polygon fill="#6fa08c" stroke="#446356" points="568,336.4 575.6,334.4 576.4,329.6 588,327.6 589,336 582,343 577,348 578,357 571,361 570,353 573,345 570,339"/>
<polygon fill="#6fa0d0" stroke="#446380" points="605,331 608,333 607,340 603,352 599,360 595,360 593,354 596,344 601,337"/>
<polygon fill="#d878b0" stroke="#854a6d" points="560.4,369 562.4,368.4 563.6,370.4 561.6,372 560,370.8"/>
<polygon fill="#45729e" stroke="#2a4661" points="593.4,196 600.1,193.5 603.4,196.8 600.9,201.8 605.1,206 608.5,208.5 607.6,213.5 604.3,216.9 600.9,213.5 597.6,206.8 594.3,201.8 592.6,198.5"/>
<polygon fill="#a5404e" stroke="#662730" points="613.1,196 616,194.3 617.6,196.8 616,200.2 613.5,199.3"/>
<polygon fill="#dc97c5" stroke="#885d7a" points="555.1,328 563.3,329.7 566.3,331.5 565.1,322.7 568,321.5 575.1,325.1 576.2,328.6 575.1,332.1 577.4,335.6 578.6,339.1 576.2,340.3 573.9,336.8 568,336.8 571.5,341.5 572.7,352 532.9,352 530.5,342.6 552.2,343.2 551.6,340.3 551,333.8 554,330.9"/>
<polygon fill="#dc97c5" stroke="#885d7a" points="569.8,293.4 576.2,291.7 583.3,293.4 590.9,292.8 590.3,299.3 591.5,304.6 587.9,309.8 586.2,315.7 587.4,322.7 587.9,327.4 576.2,328.6 575.1,325.1 568,321.5 566.9,313.3 566.3,308.7 566.9,304 569.2,298.1"/>
<polygon fill="#45729e" stroke="#2a4661" points="571.5,302.8 573.9,301 576,302.2 575.6,306.9 572.7,308.1 571.3,305.7"/>
<polygon fill="#d8b860" stroke="#85723b" points="532.3,313.9 537.6,312.2 541.1,305.1 542.8,299.3 544.6,292.3 546.9,290.9 552.8,291.3 558.7,290.1 566.9,291.7 569.8,293.4 569.2,298.1 566.9,304 566.3,308.7 566.9,313.3 568,320.4 565.1,322.7 564.5,326.2 566.3,330.9 563.3,329.7 558.7,328 555.1,328 552.2,326.2 551.4,318.6 546.9,318 542.3,319.8 540.5,316.3 532.9,315.7"/>
<polygon fill="#6fa08c" stroke="#446356" points="532.3,315.7 540.5,316.3 542.3,319.8 546.9,318 551.4,318.6 552.2,326.2 555.1,328 554,330.9 551,333.8 551.6,340.3 552.2,343.2 530.5,342 531.7,335.6 534.1,327.4 532.9,320.4"/>
<polygon fill="#6fa08c" stroke="#446356" points="576.2,328.6 587.9,327.4 588.5,335.6 585.6,340.3 580.9,345 577.4,348.5 576.8,352 571.5,352 572.7,345 571.5,341.5 568,336.8 573.9,336.8 576.2,340.3 578.6,339.1 577.4,335.6 575.1,332.1"/>
<polygon fill="#dc97c5" stroke="#885d7a" points="575.1,332.1 577.4,335.6 578.6,339.1 576.2,340.3 574.5,335.6"/>
<polygon fill="#6fa0d0" stroke="#446380" points="606.7,330.3 608.1,335.6 606.1,342.6 602.6,350.8 600.8,355.5 596.1,360.2 593.2,359.6 592.6,354.3 595.9,346.1 599.1,339.1 602.6,333.8"/>
<polygon fill="#70c090" stroke="#457759" points="590.3,299.3 590.9,292.8 595,290.5 600.8,286.4 605.5,280.5 609,274.7 610.4,275.9 609.3,281.7 605.8,287.6 601.1,293.4 596.4,298.7 592,304"/>
</g>
<g fill="none">
<polyline stroke="#527aa6" stroke-width="0.55" points="489,241 514,257 536,250"/>
<polyline stroke="#527aa6" stroke-width="0.55" points="504,217 504.4,226 490,233"/>
<polyline stroke="#527aa6" stroke-width="0.55" points="536,250 538,260 535,266 536,270"/>
<polyline stroke="#527aa6" stroke-width="0.55" points="536,279 538,288 534,296 526,297"/>
<polyline stroke="#527aa6" stroke-width="0.55" points="522,216 522.4,226 526,228"/>
<polyline stroke="#c070a0" stroke-width="0.55" points="548,344 546,353 547,362 558,360 565,353 570,353"/>
<polyline stroke="#c070a0" stroke-width="0.55" points="551,343 558,343 565,353 559,345"/>
<polyline stroke="#c070a0" stroke-width="0.55" points="564,330 568,336.4"/>
<polyline stroke="#c070a0" stroke-width="0.55" points="577.4,293.4 578.6,300.5 585.6,307.5 587.9,309.8"/>
<polyline stroke="#c070a0" stroke-width="0.55" points="569.8,293.4 570.4,299.3 571.5,302.8"/>
</g>
<circle cx="523.1" cy="277.4" r="5.2" fill="none" stroke="#fff" stroke-width="1.5"/><circle cx="523.1" cy="277.4" r="4.2" fill="none" stroke="#5a3a50" stroke-width=".5"/>
</svg>

</div>
</div>
</body>
</html>
